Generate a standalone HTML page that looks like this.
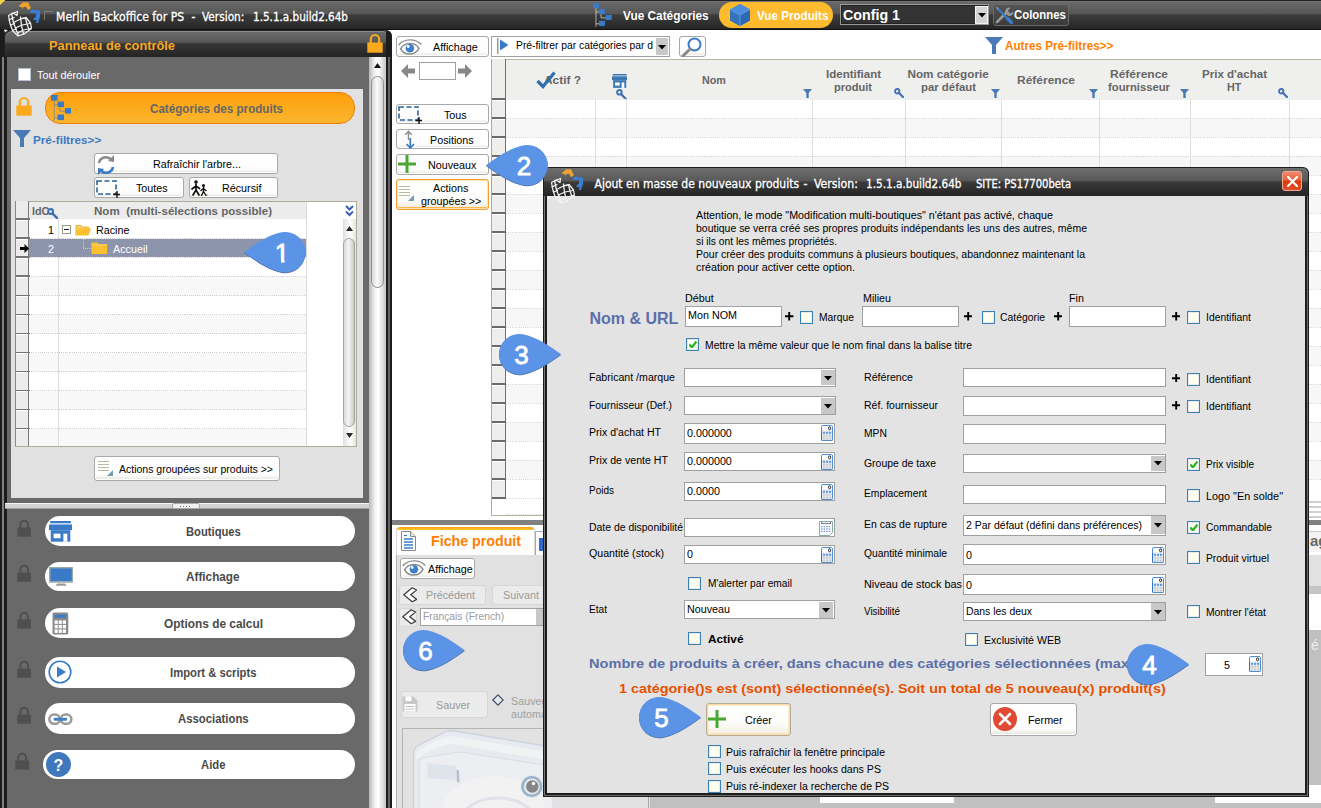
<!DOCTYPE html>
<html lang="fr"><head><meta charset="utf-8"><title>Merlin Backoffice for PS</title>
<style>

html,body{margin:0;padding:0}
body{width:1321px;height:808px;overflow:hidden;position:relative;background:#fff;font-family:"Liberation Sans",sans-serif;font-size:11px}
div,span.t,svg{position:absolute;box-sizing:border-box}
span.t{white-space:pre}
.btn{border:1px solid #a8a8a8;border-radius:3px;background:linear-gradient(#fff 0%,#fdfdfd 80%,#e6e3da 100%);box-shadow:inset 0 0 0 1px #fff}
.btnd{border:1px solid #d8d6cf;border-radius:3px;background:#ebebeb}
.tb{border:1px solid #a0a0a0;background:#fff}
.cb{width:13px;height:13px;border:1px solid #3c7fb1;background:#fffff0;box-shadow:inset 0 0 0 1px #e8ecf0}
.dd{background:#c8c8c8}
.pill{background:#fff;border-radius:15px}

</style></head>
<body>
<div style="left:0px;top:0px;width:1321px;height:29.5px;background:linear-gradient(#222 0 3%,#747474 4% 6%,#686868 8%,#565656 46%,#3d3d3d 49%,#242424 100%)"></div>
<div style="left:0px;top:29px;width:1321px;height:1px;background:#111"></div>
<div style="left:43.5px;top:10.5px;width:9px;height:1px;background:#7a7a7a"></div>
<div style="left:43.5px;top:10.5px;width:1px;height:9px;background:#7a7a7a"></div>
<span class="t" style="left:56.0px;top:9.0px;font-size:12px;line-height:16px;color:#fff;font-family:'DejaVu Sans Condensed','Liberation Sans',sans-serif;transform:scaleX(1.0083);transform-origin:0 50%;-webkit-text-stroke:0.300px #fff;">Merlin Backoffice for PS</span>
<span class="t" style="left:191.5px;top:9.0px;font-size:12px;line-height:16px;color:#fff;font-family:'DejaVu Sans Condensed','Liberation Sans',sans-serif;-webkit-text-stroke:0.300px #fff;">-</span>
<span class="t" style="left:202.4px;top:9.0px;font-size:12px;line-height:16px;color:#fff;font-family:'DejaVu Sans Condensed','Liberation Sans',sans-serif;transform:scaleX(0.9803);transform-origin:0 50%;-webkit-text-stroke:0.300px #fff;">Version:</span>
<span class="t" style="left:253.0px;top:9.0px;font-size:12px;line-height:16px;color:#fff;font-family:'DejaVu Sans Condensed','Liberation Sans',sans-serif;transform:scaleX(0.9657);transform-origin:0 50%;-webkit-text-stroke:0.300px #fff;">1.5.1.a.build2.64b</span>
<svg style="left:593px;top:3px;" width="18.7" height="25.5" viewBox="0 0 22 30"><path d="M3.5 4v24M3.5 10.5h6M9.5 10.5v7h6M3.5 24.5h6" fill="none" stroke="#c8c8c8" stroke-width="1"/><rect x="0" y="0" width="7" height="6" fill="#3a7bc8"/><rect x="7" y="7" width="7" height="6" fill="#3a7bc8"/><rect x="15" y="14" width="7" height="6" fill="#3a7bc8"/><rect x="7" y="21" width="7" height="6" fill="#3a7bc8"/></svg>
<span class="t" style="left:623.3px;top:7.7px;font-size:12px;line-height:16px;color:#fff;font-weight:bold;transform:scaleX(0.9859);transform-origin:0 50%;">Vue Catégories</span>
<div style="left:719px;top:2px;width:114px;height:26px;background:#fdbb2d;border-radius:13px"></div>
<svg style="left:729.6px;top:3.5px;" width="20" height="22" viewBox="0 0 20 22"><path d="M10 0l10 5.5v11L10 22L0 16.5v-11z" fill="#3a7bc8"/><path d="M10 0l10 5.5L10 11L0 5.5z" fill="#4d8edb"/><path d="M0 5.5L10 11v11L0 16.5z" fill="#3573bd"/><path d="M10 11l10-5.5v11L10 22z" fill="#2e69b3"/><path d="M0 5.5L10 11l10-5.5M10 11v11" stroke="#6aa5e8" stroke-width="0.8" fill="none"/></svg>
<span class="t" style="left:757.0px;top:7.7px;font-size:12px;line-height:16px;color:#fff;font-weight:bold;transform:scaleX(0.9704);transform-origin:0 50%;">Vue Produits</span>
<div style="left:839.8px;top:4.3px;width:149.6px;height:21px;background:#333;border:1px solid #9a9a9a;box-shadow:inset 0 0 0 1px #222"></div>
<span class="t" style="left:843.0px;top:6.0px;font-size:14px;line-height:18px;color:#fff;font-weight:bold;transform:scaleX(1.0179);transform-origin:0 50%;">Config 1</span>
<div style="left:974.7px;top:6px;width:13.5px;height:17.6px;background:#d4d4d4;border:1px solid #f4f4f4"></div>
<svg style="left:977.5px;top:13px;" width="8" height="5" viewBox="0 0 8 5"><path d="M0 0h8l-4 4.500z" fill="#000"/></svg>
<div style="left:993px;top:3.5px;width:76.2px;height:22px;background:linear-gradient(#555,#3a3a3a);border:1px solid #6a6a6a;border-radius:3px"></div>
<svg style="left:995px;top:5.5px;" width="18" height="18" viewBox="0 0 18 18"><path d="M2 16L11 7" stroke="#9a9a9a" stroke-width="2.6" stroke-linecap="round"/><path d="M10.5 7.5a4 4 0 0 1 5-5.6l-2.5 2.5l1 2l2 1l2.3-2.4a4 4 0 0 1-5.6 4.5" fill="#9a9a9a"/><path d="M2 2l12 12" stroke="#3a7bc8" stroke-width="2.2"/><path d="M12.5 12.5l4 4" stroke="#3a7bc8" stroke-width="3.4" stroke-linecap="round"/><path d="M0.8 0.8l3 1l-1.5 2z" fill="#9a9a9a"/></svg>
<span class="t" style="left:1014.0px;top:7.0px;font-size:12px;line-height:16px;color:#fff;font-weight:bold;transform:scaleX(0.9475);transform-origin:0 50%;">Colonnes</span>
<div style="left:391.7px;top:29.5px;width:930px;height:780px;background:#fff"></div>
<div style="left:0px;top:30px;width:11px;height:778px;background:#1c1c1c"></div>
<div style="left:4px;top:30px;width:387.7px;height:778px;background:#696969;border-radius:8px 8px 0 0"></div>
<div style="left:4px;top:30px;width:387px;height:27px;background:linear-gradient(#6c6c6c 0%,#585858 42%,#363636 50%,#242424 100%);border-radius:8px 8px 0 0;border:1px solid #222;border-bottom:none;box-shadow:inset 0 1px 0 #8c8c8c"></div>
<span class="t" style="left:49.0px;top:36.5px;font-size:13px;line-height:17px;color:#f7a823;font-weight:bold;transform:scaleX(0.9853);transform-origin:0 50%;">Panneau de contrôle</span>
<svg style="left:366.7px;top:33px;" width="16" height="20" viewBox="0 0 16 20"><path d="M3.800 10V6.200a4.200 4.200 0 0 1 8.400 0V10" fill="none" stroke="#fbaa1d" stroke-width="2.200"/><rect x="0.300" y="9.500" width="15.400" height="10.200" fill="#fbaa1d"/></svg>
<div style="left:0px;top:57px;width:7.3px;height:751px;background:linear-gradient(90deg,#1c1c1c 0 2.300px,#808080 2.300px 4.200px,#1c1c1c 4.200px)"></div>
<div style="left:368.7px;top:57px;width:17px;height:751px;background:linear-gradient(90deg,#b8b8b8,#f4f4f4 35%,#fff 55%,#c4c4c4)"></div>
<svg style="left:373.5px;top:63px;" width="7" height="5" viewBox="0 0 7 5"><path d="M3.500 0L7 5H0z" fill="#111"/></svg>
<div style="left:370.5px;top:76px;width:13.5px;height:212px;border:1px solid #909090;border-radius:7px;background:linear-gradient(90deg,#d8d8d8,#fafafa 45%,#e0e0e0 85%,#cccccc)"></div>
<div style="left:385.7px;top:57px;width:6px;height:751px;background:linear-gradient(90deg,#1c1c1c 0 35%,#8a8a8a 45% 55%,#1c1c1c 65%)"></div>
<div style="left:385.7px;top:30px;width:6px;height:27px;background:#1c1c1c;border-radius:0 8px 0 0"></div>
<div style="left:18px;top:68px;width:13px;height:13px;background:#fff;border:1px solid #b8c0d0"></div>
<span class="t" style="left:37.0px;top:66.5px;font-size:11.7px;line-height:15px;color:#fff;transform:scaleX(0.9235);transform-origin:0 50%;">Tout dérouler</span>
<div style="left:11px;top:89px;width:351.5px;height:409px;background:#e1e1e1"></div>
<svg style="left:16px;top:96px;" width="16" height="20" viewBox="0 0 16 20"><path d="M3.800 10V6.200a4.200 4.200 0 0 1 8.400 0V10" fill="none" stroke="#fbaa1d" stroke-width="2.200"/><rect x="0.300" y="9.500" width="15.400" height="10.200" fill="#fbaa1d"/></svg>
<div style="left:45px;top:92px;width:310px;height:32px;background:linear-gradient(#ff9f0a,#fbb62f);border:1px solid #f07c00;border-radius:15px"></div>
<svg style="left:51px;top:94.5px;" width="20.46" height="27.9" viewBox="0 0 22 30"><path d="M3.5 4v24M3.5 10.5h6M9.5 10.5v7h6M3.5 24.5h6" fill="none" stroke="#8a8a8a" stroke-width="1"/><rect x="0" y="0" width="7" height="6" fill="#3a7bc8"/><rect x="7" y="7" width="7" height="6" fill="#3a7bc8"/><rect x="15" y="14" width="7" height="6" fill="#3a7bc8"/><rect x="7" y="21" width="7" height="6" fill="#3a7bc8"/></svg>
<span class="t" style="left:150.0px;top:100.5px;font-size:12px;line-height:16px;color:#666;font-weight:bold;transform:scaleX(0.9682);transform-origin:0 50%;">Catégories des produits</span>
<svg style="left:13px;top:130px;" width="18" height="18" viewBox="0 0 18 18"><path d="M0 0h18l-7 8v9h-4v-9z" fill="#4a7ab5"/></svg>
<span class="t" style="left:33.0px;top:131.5px;font-size:11.7px;line-height:15px;color:#3d78c2;font-weight:bold;">Pré-filtres&gt;&gt;</span>
<div class="btn" style="left:94px;top:153.3px;width:183.5px;height:21px;"></div>
<svg style="left:97px;top:154.5px;" width="18" height="20" viewBox="0 0 18 20"><path d="M2 8a7 7 0 0 1 12-3.5" fill="none" stroke="#8a8a8a" stroke-width="2.6"/><path d="M11 6l6-6v7z" fill="#8a8a8a"/><path d="M16 12a7 7 0 0 1-12 3.5" fill="none" stroke="#3a7bc8" stroke-width="2.6"/><path d="M7 14l-6 6v-7z" fill="#3a7bc8"/></svg>
<span class="t" style="left:152.5px;top:156.0px;font-size:11.7px;line-height:15px;color:#000;transform:scaleX(0.9189);transform-origin:0 50%;">Rafraîchir l'arbre...</span>
<div class="btn" style="left:94px;top:177px;width:89.5px;height:21.3px;"></div>
<svg style="left:96px;top:179.5px;" width="24" height="18" viewBox="0 0 24 18"><rect x="1" y="1" width="19" height="13" fill="none" stroke="#2a6496" stroke-width="1.6" stroke-dasharray="5 2.5"/><path d="M21 11v7M17.5 14.5h7" stroke="#111" stroke-width="1.4"/></svg>
<span class="t" style="left:135.7px;top:180.0px;font-size:11.7px;line-height:15px;color:#000;transform:scaleX(0.9200);transform-origin:0 50%;">Toutes</span>
<div class="btn" style="left:189px;top:177px;width:88.5px;height:21.3px;"></div>
<svg style="left:191px;top:180px;" width="18" height="16" viewBox="0 0 18 16"><circle cx="5" cy="2" r="1.8" fill="#111"/><path d="M5 4v6M5 10l-3 5M5 10l3 5M5 6l-4 3M5 6l3.5 2.5" stroke="#111" stroke-width="1.7" fill="none" stroke-linecap="round"/><circle cx="12.5" cy="5.5" r="1.5" fill="#111"/><path d="M12.5 7v4.5M12.5 11.5l-2 4M12.5 11.5l2.5 4M12.5 8.5l-2.5 2M12.5 8.5l2.5 2" stroke="#111" stroke-width="1.4" fill="none" stroke-linecap="round"/><circle cx="16" cy="15" r="0.7" fill="#3a3"/></svg>
<span class="t" style="left:221.8px;top:180.0px;font-size:11.7px;line-height:15px;color:#000;transform:scaleX(0.9200);transform-origin:0 50%;">Récursif</span>
<div style="left:15px;top:201.3px;width:341.5px;height:245.5px;background:#fff;border:1px solid #b0ac9c"></div>
<div style="left:16px;top:202.3px;width:290px;height:17.1px;background:#ececec"></div>
<div style="left:29px;top:238.43px;width:277px;height:19.03px;background:#f8f8f8"></div>
<div style="left:29px;top:276.49px;width:277px;height:19.03px;background:#f8f8f8"></div>
<div style="left:29px;top:314.55px;width:277px;height:19.03px;background:#f8f8f8"></div>
<div style="left:29px;top:352.61px;width:277px;height:19.03px;background:#f8f8f8"></div>
<div style="left:29px;top:390.67px;width:277px;height:19.03px;background:#f8f8f8"></div>
<div style="left:29px;top:428.73px;width:277px;height:17.07px;background:#f8f8f8"></div>
<div style="left:29px;top:237.93px;width:277px;height:1px;background:repeating-linear-gradient(90deg,#d0d0d0 0 1.05px,transparent 1.05px 2.13px)"></div>
<div style="left:29px;top:256.96px;width:277px;height:1px;background:repeating-linear-gradient(90deg,#d0d0d0 0 1.05px,transparent 1.05px 2.13px)"></div>
<div style="left:29px;top:275.99px;width:277px;height:1px;background:repeating-linear-gradient(90deg,#d0d0d0 0 1.05px,transparent 1.05px 2.13px)"></div>
<div style="left:29px;top:295.02px;width:277px;height:1px;background:repeating-linear-gradient(90deg,#d0d0d0 0 1.05px,transparent 1.05px 2.13px)"></div>
<div style="left:29px;top:314.05px;width:277px;height:1px;background:repeating-linear-gradient(90deg,#d0d0d0 0 1.05px,transparent 1.05px 2.13px)"></div>
<div style="left:29px;top:333.08px;width:277px;height:1px;background:repeating-linear-gradient(90deg,#d0d0d0 0 1.05px,transparent 1.05px 2.13px)"></div>
<div style="left:29px;top:352.11px;width:277px;height:1px;background:repeating-linear-gradient(90deg,#d0d0d0 0 1.05px,transparent 1.05px 2.13px)"></div>
<div style="left:29px;top:371.14px;width:277px;height:1px;background:repeating-linear-gradient(90deg,#d0d0d0 0 1.05px,transparent 1.05px 2.13px)"></div>
<div style="left:29px;top:390.17px;width:277px;height:1px;background:repeating-linear-gradient(90deg,#d0d0d0 0 1.05px,transparent 1.05px 2.13px)"></div>
<div style="left:29px;top:409.2px;width:277px;height:1px;background:repeating-linear-gradient(90deg,#d0d0d0 0 1.05px,transparent 1.05px 2.13px)"></div>
<div style="left:29px;top:428.23px;width:277px;height:1px;background:repeating-linear-gradient(90deg,#d0d0d0 0 1.05px,transparent 1.05px 2.13px)"></div>
<div style="left:58px;top:219.4px;width:1px;height:226.9px;background:#dcdcdc"></div>
<div style="left:306px;top:202px;width:1px;height:244.3px;background:#dcdcdc"></div>
<div style="left:15px;top:201.3px;width:14px;height:245px;background:#ececec;border-left:1px solid #888"></div>
<div style="left:28.3px;top:201.3px;width:1.2px;height:245px;background:#7a7a7a"></div>
<div style="left:16px;top:218.4px;width:13.5px;height:1.4px;background:#747474"></div>
<div style="left:16px;top:219.8px;width:12.3px;height:1px;background:#fff"></div>
<div style="left:16px;top:237.43px;width:13.5px;height:1.4px;background:#747474"></div>
<div style="left:16px;top:238.83px;width:12.3px;height:1px;background:#fff"></div>
<div style="left:16px;top:256.46px;width:13.5px;height:1.4px;background:#747474"></div>
<div style="left:16px;top:257.86px;width:12.3px;height:1px;background:#fff"></div>
<div style="left:16px;top:275.49px;width:13.5px;height:1.4px;background:#747474"></div>
<div style="left:16px;top:276.89px;width:12.3px;height:1px;background:#fff"></div>
<div style="left:16px;top:294.52px;width:13.5px;height:1.4px;background:#747474"></div>
<div style="left:16px;top:295.92px;width:12.3px;height:1px;background:#fff"></div>
<div style="left:16px;top:313.55px;width:13.5px;height:1.4px;background:#747474"></div>
<div style="left:16px;top:314.95px;width:12.3px;height:1px;background:#fff"></div>
<div style="left:16px;top:332.58px;width:13.5px;height:1.4px;background:#747474"></div>
<div style="left:16px;top:333.98px;width:12.3px;height:1px;background:#fff"></div>
<div style="left:16px;top:351.61px;width:13.5px;height:1.4px;background:#747474"></div>
<div style="left:16px;top:353.01px;width:12.3px;height:1px;background:#fff"></div>
<div style="left:16px;top:370.64px;width:13.5px;height:1.4px;background:#747474"></div>
<div style="left:16px;top:372.04px;width:12.3px;height:1px;background:#fff"></div>
<div style="left:16px;top:389.67px;width:13.5px;height:1.4px;background:#747474"></div>
<div style="left:16px;top:391.07px;width:12.3px;height:1px;background:#fff"></div>
<div style="left:16px;top:408.7px;width:13.5px;height:1.4px;background:#747474"></div>
<div style="left:16px;top:410.1px;width:12.3px;height:1px;background:#fff"></div>
<div style="left:16px;top:427.73px;width:13.5px;height:1.4px;background:#747474"></div>
<div style="left:16px;top:429.13px;width:12.3px;height:1px;background:#fff"></div>
<span class="t" style="left:32.0px;top:202.5px;font-size:11.7px;line-height:15px;color:#666;font-weight:bold;transform:scaleX(0.9200);transform-origin:0 50%;">IdC</span>
<svg style="left:47.3px;top:207.6px;" width="11.2" height="11.2" viewBox="0 0 10 10"><circle cx="3.2" cy="3.2" r="2.2" fill="none" stroke="#3d6fb5" stroke-width="1.8"/><path d="M5 5l4 4" stroke="#3d6fb5" stroke-width="2.2" stroke-linecap="round"/></svg>
<span class="t" style="left:94.0px;top:202.5px;font-size:11.7px;line-height:15px;color:#666;font-weight:bold;transform:scaleX(0.9895);transform-origin:0 50%;">Nom  (multi-sélections possible)</span>
<svg style="left:344.5px;top:205px;" width="9" height="12" viewBox="0 0 9 12"><path d="M1 1l3.5 3.5L8 1M1 6.5l3.5 3.5L8 6.5" fill="none" stroke="#3d5fb5" stroke-width="2"/></svg>
<span class="t" style="left:48.0px;top:221.7px;font-size:11.7px;line-height:15px;color:#000;transform:scaleX(0.9200);transform-origin:0 50%;">1</span>
<div style="left:61.8px;top:225px;width:9px;height:9px;background:#fff;border:1px solid #9c9c8c"></div>
<div style="left:63.8px;top:229px;width:5px;height:1px;background:#111"></div>
<svg style="left:75px;top:222.6px;" width="16" height="13" viewBox="0 0 16 13"><path d="M1 12V2.5h5l1.5 1.5h6v2" fill="#f6d36b" stroke="#d9a520" stroke-width="0.8"/><path d="M0.5 12.5l2.5-7h13l-2.5 7z" fill="#fbc02d"/></svg>
<span class="t" style="left:96.4px;top:221.7px;font-size:11.7px;line-height:15px;color:#000;transform:scaleX(0.9200);transform-origin:0 50%;">Racine</span>
<div style="left:29px;top:238.9px;width:277.2px;height:18.6px;background:#8d95ad"></div>
<svg style="left:19.5px;top:244.2px;" width="9" height="9" viewBox="0 0 9 9"><path d="M0 3h4.500V0L9 4.500L4.500 9V6H0z" fill="#000"/></svg>
<span class="t" style="left:48.0px;top:240.7px;font-size:11.7px;line-height:15px;color:#fff;transform:scaleX(0.9200);transform-origin:0 50%;">2</span>
<div style="left:82.5px;top:248.1px;width:9px;height:1px;background:repeating-linear-gradient(90deg,#ccc 0 1px,transparent 1px 2px)"></div>
<div style="left:82.5px;top:238.5px;width:1px;height:10px;background:repeating-linear-gradient(#ccc 0 1px,transparent 1px 2px)"></div>
<svg style="left:91px;top:241.2px;" width="16.64" height="13.52" viewBox="0 0 16 13"><path d="M0.5 12.5V1.5h5.5l1.5 1.5h8v9.5z" fill="#fbc02d"/><path d="M0.5 4h15" stroke="#f9d56e" stroke-width="1"/></svg>
<span class="t" style="left:112.7px;top:240.7px;font-size:11.7px;line-height:15px;color:#fff;transform:scaleX(0.9200);transform-origin:0 50%;">Accueil</span>
<div style="left:342.5px;top:219px;width:13.3px;height:226.8px;background:linear-gradient(90deg,#e4e4e4,#fff 50%,#e4e4e4);border-left:1px solid #e0e0e0"></div>
<svg style="left:346px;top:226px;" width="7" height="5" viewBox="0 0 7 5"><path d="M3.500 0l3.500 5H0z" fill="#2a2a2a"/></svg>
<svg style="left:346px;top:433px;" width="7" height="5" viewBox="0 0 7 5"><path d="M3.500 5l3.500-5H0z" fill="#2a2a2a"/></svg>
<div style="left:343.2px;top:237.5px;width:12.3px;height:189px;border:1px solid #a4a4a4;border-radius:6px;background:linear-gradient(90deg,#dadada,#f4f4f4 45%,#d6d6d6 85%,#c4c4c4)"></div>
<div class="btn" style="left:94px;top:456.2px;width:185.6px;height:25px;"></div>
<svg style="left:97px;top:459.5px;" width="17" height="17" viewBox="0 0 17 17"><path d="M1 1.5h11M1 4.5h11M1 7.5h11M1 10.5h11" stroke="#b9b9a4" stroke-width="1"/><path d="M10 16l6-6v6z" fill="#6f9eb5"/></svg>
<span class="t" style="left:119.0px;top:461.0px;font-size:11.7px;line-height:15px;color:#000;transform:scaleX(0.8978);transform-origin:0 50%;">Actions groupées sur produits &gt;&gt;</span>
<div style="left:11px;top:498px;width:357px;height:5px;background:#696969"></div>
<div style="left:5px;top:503px;width:364px;height:5.5px;background:#d2d2d2;border-top:1px solid #f4f4f4;border-bottom:1px solid #a0a0a0"></div>
<div style="left:172px;top:503px;width:28px;height:5.5px;background:#f0f0f0;border:1px solid #aaa;border-radius:2px"></div>
<div style="left:180px;top:505.5px;width:12px;height:1px;background:repeating-linear-gradient(90deg,#777 0 1px,transparent 1px 3px)"></div>
<div class="pill" style="left:44.6px;top:516.45px;width:310.7px;height:29.7px;"></div>
<svg style="left:16.8px;top:518.8px;" width="14.4" height="18" viewBox="0 0 16 20"><path d="M3.800 10V6.200a4.200 4.200 0 0 1 8.400 0V10" fill="none" stroke="#4f4f4f" stroke-width="2.200"/><rect x="0.300" y="9.500" width="15.400" height="10.200" fill="#4f4f4f"/></svg>
<svg style="left:48.5px;top:521px;" width="23" height="20.7" viewBox="0 0 20 18"><rect x="1" y="0" width="18" height="2" fill="#3a7bc8"/><path d="M0 3h20v5H0z" fill="#3a7bc8"/><path d="M1.5 8v10h17V8" fill="#3a7bc8"/><rect x="4" y="11" width="6" height="4" fill="#fff"/><rect x="12.5" y="11" width="3.5" height="7" fill="#fff"/></svg>
<span class="t" style="left:185.8px;top:523.8px;font-size:12px;line-height:16px;color:#4a4a4a;font-weight:bold;transform:scaleX(0.9340);transform-origin:0 50%;">Boutiques</span>
<div class="pill" style="left:44.6px;top:561.55px;width:310.7px;height:29.7px;"></div>
<svg style="left:16.8px;top:563.9px;" width="14.4" height="18" viewBox="0 0 16 20"><path d="M3.800 10V6.200a4.200 4.200 0 0 1 8.400 0V10" fill="none" stroke="#4f4f4f" stroke-width="2.200"/><rect x="0.300" y="9.500" width="15.400" height="10.200" fill="#4f4f4f"/></svg>
<svg style="left:48.5px;top:567px;" width="24.2" height="19.8" viewBox="0 0 22 18"><rect x="0.5" y="0.5" width="21" height="13" fill="#3a7bc8" stroke="#9aa" stroke-width="1.6"/><path d="M6 17h10l-1.5-2h-7z" fill="#999"/></svg>
<span class="t" style="left:186.4px;top:568.9px;font-size:12px;line-height:16px;color:#4a4a4a;font-weight:bold;transform:scaleX(0.9801);transform-origin:0 50%;">Affichage</span>
<div class="pill" style="left:44.6px;top:608.45px;width:310.7px;height:29.7px;"></div>
<svg style="left:16.8px;top:610.8px;" width="14.4" height="18" viewBox="0 0 16 20"><path d="M3.800 10V6.200a4.200 4.200 0 0 1 8.400 0V10" fill="none" stroke="#4f4f4f" stroke-width="2.200"/><rect x="0.300" y="9.500" width="15.400" height="10.200" fill="#4f4f4f"/></svg>
<svg style="left:52px;top:611.5px;" width="16.8" height="23.1" viewBox="0 0 16 22"><rect x="0.5" y="0.5" width="15" height="21" rx="1.5" fill="#8a8a8a"/><rect x="2.5" y="2.5" width="11" height="3" fill="#3a7bc8"/><rect x="2.5" y="8.0" width="3" height="3.3" fill="#fff"/><rect x="6.4" y="8.0" width="3" height="3.3" fill="#fff"/><rect x="10.3" y="8.0" width="3" height="3.3" fill="#fff"/><rect x="2.5" y="12.3" width="3" height="3.3" fill="#fff"/><rect x="6.4" y="12.3" width="3" height="3.3" fill="#fff"/><rect x="10.3" y="12.3" width="3" height="3.3" fill="#fff"/><rect x="2.5" y="16.6" width="3" height="3.3" fill="#fff"/><rect x="6.4" y="16.6" width="3" height="3.3" fill="#fff"/><rect x="10.3" y="16.6" width="3" height="3.3" fill="#fff"/></svg>
<span class="t" style="left:163.7px;top:615.8px;font-size:12px;line-height:16px;color:#4a4a4a;font-weight:bold;transform:scaleX(0.9897);transform-origin:0 50%;">Options de calcul</span>
<div class="pill" style="left:44.6px;top:657px;width:310.7px;height:31px;"></div>
<svg style="left:16.8px;top:660px;" width="14.4" height="18" viewBox="0 0 16 20"><path d="M3.800 10V6.200a4.200 4.200 0 0 1 8.400 0V10" fill="none" stroke="#4f4f4f" stroke-width="2.200"/><rect x="0.300" y="9.500" width="15.400" height="10.200" fill="#4f4f4f"/></svg>
<svg style="left:47.9px;top:659.9px;" width="24" height="24" viewBox="0 0 24 24"><circle cx="12" cy="12" r="10.8" fill="#fff" stroke="#3a7bc8" stroke-width="1.6"/><path d="M9 6.5v11l9-5.5z" fill="#3a7bc8"/></svg>
<span class="t" style="left:169.9px;top:665.0px;font-size:12px;line-height:16px;color:#4a4a4a;font-weight:bold;transform:scaleX(0.9401);transform-origin:0 50%;">Import &amp; scripts</span>
<div class="pill" style="left:44.6px;top:703px;width:310.7px;height:31px;"></div>
<svg style="left:16.8px;top:706px;" width="14.4" height="18" viewBox="0 0 16 20"><path d="M3.800 10V6.200a4.200 4.200 0 0 1 8.400 0V10" fill="none" stroke="#4f4f4f" stroke-width="2.200"/><rect x="0.300" y="9.500" width="15.400" height="10.200" fill="#4f4f4f"/></svg>
<svg style="left:48px;top:712.5px;" width="24.72" height="12.36" viewBox="0 0 24 12"><rect x="1.300" y="1.500" width="10.200" height="9" rx="4.500" fill="none" stroke="#9a9a9a" stroke-width="2.400"/><rect x="12.500" y="1.500" width="10.200" height="9" rx="4.500" fill="none" stroke="#9a9a9a" stroke-width="2.400"/><rect x="5.500" y="4.500" width="13" height="3" rx="1.300" fill="#3f7fc8"/></svg>
<span class="t" style="left:177.8px;top:711.0px;font-size:12px;line-height:16px;color:#4a4a4a;font-weight:bold;transform:scaleX(0.9464);transform-origin:0 50%;">Associations</span>
<div class="pill" style="left:43px;top:749.8px;width:312.3px;height:29.2px;"></div>
<svg style="left:15.3px;top:751.9px;" width="14.4" height="18" viewBox="0 0 16 20"><path d="M3.800 10V6.200a4.200 4.200 0 0 1 8.400 0V10" fill="none" stroke="#4f4f4f" stroke-width="2.200"/><rect x="0.300" y="9.500" width="15.400" height="10.200" fill="#4f4f4f"/></svg>
<svg style="left:46px;top:752.2px;" width="24.96" height="24.96" viewBox="0 0 24 24"><circle cx="12" cy="12" r="12" fill="#3f78bd"/></svg>
<span class="t" style="left:201.0px;top:756.9px;font-size:12px;line-height:16px;color:#4a4a4a;font-weight:bold;transform:scaleX(0.9379);transform-origin:0 50%;">Aide</span>
<span class="t" style="left:53.6px;top:754.5px;font-size:16px;line-height:21px;color:#fff;font-weight:bold;">?</span>
<svg style="left:0px;top:0px;" width="44" height="40" viewBox="0 0 44 40"><path d="M19 5.500l3-2l1-1.500l2 0.500l2-0.500l2 1.500l0.500 2.500l1.500 1.500l-1 1.500l-2 1l-1-2l-2-1.500l-2 1l-0.500 1.500l-1-2l-2.500-0.500z" fill="#efa22f"/><path d="M30 11l3-2l2 1.500l4-0.500l1 2v5l-1 3l-1 3h-2l0.500-3h-3.500l1.500-2.500l1.500-0.500v-4h-3l-3-0.500z" fill="#3a7fd5"/><g fill="none" stroke="#f2f2f2" stroke-width="1.250" stroke-linejoin="round" stroke-linecap="round"><path d="M17.500 11.500l-4 1.500l-5 2.500l1.500 8l2.500 7l5.500 5.500l6-2l7.500-5.500l-1-5.500l-4.500-5.500l-5 1"/><path d="M11.500 13.500l2 9.500l3 7.500l2 5"/><path d="M9 20l5-2.500M10.500 25l4-1.500M12.500 30.500l3.500-1.500"/><path d="M13.500 22.500l7-3.500l5.500-1M15.500 28l6.500-3l8-1.500M17.500 33l6-3l7-1.500"/><path d="M20.500 17l1 8.500l2 8.500M25.500 18l1.500 6l2 5.500"/><path d="M13 13l4 2.500l0.500-4"/></g><path d="M4 29.500l4 0.500l-3 2.500z" fill="#f2f2f2"/></svg>
<svg style="left:0px;top:0px;" width="6" height="6" viewBox="0 0 6 6"><path d="M0 0h5.500L0 5z" fill="#f2d048"/></svg>
<div class="btn" style="left:396.3px;top:36.3px;width:92.7px;height:20.7px;"></div>
<svg style="left:398px;top:38.5px;" width="24" height="17" viewBox="0 0 24 17"><path d="M0.700 6C6 -0.800 17.500 -0.800 23.300 5.500" fill="none" stroke="#8c8c8c" stroke-width="1.400"/><path d="M2.600 9.800C6.500 2.800 16.800 2.800 21 9.300C17 16.800 6.500 16.800 2.600 9.800z" fill="#fff" stroke="#8c8c8c" stroke-width="1.500"/><circle cx="11.900" cy="9.300" r="4.300" fill="#3d7fc8"/><circle cx="10.200" cy="7.500" r="1.400" fill="#fff"/></svg>
<span class="t" style="left:432.7px;top:39.0px;font-size:11.7px;line-height:15px;color:#000;transform:scaleX(0.9200);transform-origin:0 50%;">Affichage</span>
<div class="tb" style="left:491px;top:36px;width:178.6px;height:20.5px;"></div>
<svg style="left:497px;top:38px;" width="12" height="16" viewBox="0 0 12 16"><path d="M0.500 0v16" stroke="#9a9a9a" stroke-width="2"/><path d="M3 1.500l8.500 5.500L3 12.500z" fill="#3a7bc8"/></svg>
<span class="t" style="left:516.0px;top:37.0px;font-size:11.7px;line-height:15px;color:#000;transform:scaleX(0.8824);transform-origin:0 50%;">Pré-filtrer par catégories par d</span>
<div class="dd" style="left:655.8px;top:37.5px;width:12px;height:17px;"></div>
<svg style="left:657.8px;top:44.5px;" width="8" height="5" viewBox="0 0 8 5"><path d="M0 0h8l-4 4.500z" fill="#000"/></svg>
<div class="btn" style="left:679px;top:36.4px;width:27.4px;height:20.6px;"></div>
<svg style="left:681px;top:37px;" width="22" height="20" viewBox="0 0 22 20"><circle cx="13.5" cy="7.5" r="6" fill="#fff" stroke="#3a7bc8" stroke-width="2"/><path d="M8.5 12.5L2 19" stroke="#8a8a8a" stroke-width="3" stroke-linecap="round"/></svg>
<svg style="left:984.5px;top:37px;" width="18" height="18" viewBox="0 0 18 18"><path d="M0 0h18l-7 8v9h-4v-9z" fill="#4a7ab5"/></svg>
<span class="t" style="left:1004.6px;top:37.7px;font-size:12px;line-height:16px;color:#ff8000;font-weight:bold;transform:scaleX(0.9732);transform-origin:0 50%;">Autres Pré-filtres&gt;&gt;</span>
<svg style="left:401px;top:64px;" width="14" height="14" viewBox="0 0 14 14"><path d="M0 7l7-7v4.5h7v5H7V14z" fill="#888"/></svg>
<div class="tb" style="left:419px;top:62px;width:37px;height:17.7px;"></div>
<svg style="left:458px;top:64px;" width="14" height="14" viewBox="0 0 14 14"><path d="M14 7l-7-7v4.5H0v5h7V14z" fill="#888"/></svg>
<div class="btn" style="left:396.3px;top:104.3px;width:92.7px;height:20.2px;"></div>
<svg style="left:398px;top:106px;" width="24" height="18" viewBox="0 0 24 18"><rect x="1" y="1" width="19" height="13" fill="none" stroke="#2a6496" stroke-width="1.6" stroke-dasharray="5 2.5"/><path d="M21 11v7M17.5 14.5h7" stroke="#111" stroke-width="1.4"/></svg>
<span class="t" style="left:443.6px;top:106.9px;font-size:11.7px;line-height:15px;color:#000;transform:scaleX(0.9200);transform-origin:0 50%;">Tous</span>
<div class="btn" style="left:396.3px;top:129.2px;width:92.7px;height:20.3px;"></div>
<svg style="left:402.5px;top:130px;" width="14" height="20" viewBox="0 0 14 20"><path d="M5.5 10V1.5M2.3 4.8L5.5 1.3L8.700 4.800" fill="none" stroke="#8f8f8f" stroke-width="1.5"/><path d="M7.300 8v10M3.600 14L7.300 18L11 14" fill="none" stroke="#3a7bc8" stroke-width="1.700"/></svg>
<span class="t" style="left:430.2px;top:131.8px;font-size:11.7px;line-height:15px;color:#000;transform:scaleX(0.9200);transform-origin:0 50%;">Positions</span>
<div class="btn" style="left:396.3px;top:154.1px;width:92.7px;height:20.6px;"></div>
<svg style="left:398px;top:155px;" width="18" height="18" viewBox="0 0 18 18"><path d="M9 0v18M0 9h18" stroke="#4aa832" stroke-width="3"/></svg>
<span class="t" style="left:427.8px;top:156.9px;font-size:11.7px;line-height:15px;color:#000;transform:scaleX(0.9200);transform-origin:0 50%;">Nouveaux</span>
<div style="left:396.3px;top:179.4px;width:92.7px;height:30.2px;border:1px solid #f0a030;border-radius:3px;background:linear-gradient(#fff,#fbfbf8 70%,#f3ead8);box-shadow:inset 0 0 0 1px #fde3b0, inset 0 -2px 0 0 #f9b54a"></div>
<svg style="left:398px;top:185px;" width="17" height="17" viewBox="0 0 17 17"><path d="M1 1.5h11M1 4.5h11M1 7.5h11M1 10.5h11" stroke="#b9b9a4" stroke-width="1"/><path d="M10 16l6-6v6z" fill="#6f9eb5"/></svg>
<span class="t" style="left:433.4px;top:180.0px;font-size:11.7px;line-height:15px;color:#000;transform:scaleX(0.9200);transform-origin:0 50%;">Actions</span>
<span class="t" style="left:420.8px;top:193.0px;font-size:11.7px;line-height:15px;color:#000;transform:scaleX(0.9200);transform-origin:0 50%;">groupées &gt;&gt;</span>
<div style="left:491.4px;top:58.5px;width:830px;height:1px;background:#b8b4a8"></div>
<div style="left:506px;top:59.5px;width:816px;height:40.3px;background:#efefee"></div>
<div style="left:506px;top:118.31px;width:816px;height:19.01px;background:#f7f7f7"></div>
<div style="left:506px;top:156.33px;width:816px;height:19.01px;background:#f7f7f7"></div>
<div style="left:506px;top:194.35px;width:816px;height:19.01px;background:#f7f7f7"></div>
<div style="left:506px;top:232.37px;width:816px;height:19.01px;background:#f7f7f7"></div>
<div style="left:506px;top:270.39px;width:816px;height:19.01px;background:#f7f7f7"></div>
<div style="left:506px;top:308.41px;width:816px;height:19.01px;background:#f7f7f7"></div>
<div style="left:506px;top:346.43px;width:816px;height:19.01px;background:#f7f7f7"></div>
<div style="left:506px;top:384.45px;width:816px;height:19.01px;background:#f7f7f7"></div>
<div style="left:506px;top:422.47px;width:816px;height:19.01px;background:#f7f7f7"></div>
<div style="left:506px;top:460.49px;width:816px;height:19.01px;background:#f7f7f7"></div>
<div style="left:506px;top:117.81px;width:816px;height:1px;background:repeating-linear-gradient(90deg,#d8d8d8 0 1.05px,transparent 1.05px 2.13px)"></div>
<div style="left:506px;top:136.82px;width:816px;height:1px;background:repeating-linear-gradient(90deg,#d8d8d8 0 1.05px,transparent 1.05px 2.13px)"></div>
<div style="left:506px;top:155.83px;width:816px;height:1px;background:repeating-linear-gradient(90deg,#d8d8d8 0 1.05px,transparent 1.05px 2.13px)"></div>
<div style="left:506px;top:174.84px;width:816px;height:1px;background:repeating-linear-gradient(90deg,#d8d8d8 0 1.05px,transparent 1.05px 2.13px)"></div>
<div style="left:506px;top:193.85px;width:816px;height:1px;background:repeating-linear-gradient(90deg,#d8d8d8 0 1.05px,transparent 1.05px 2.13px)"></div>
<div style="left:506px;top:212.86px;width:816px;height:1px;background:repeating-linear-gradient(90deg,#d8d8d8 0 1.05px,transparent 1.05px 2.13px)"></div>
<div style="left:506px;top:231.87px;width:816px;height:1px;background:repeating-linear-gradient(90deg,#d8d8d8 0 1.05px,transparent 1.05px 2.13px)"></div>
<div style="left:506px;top:250.88px;width:816px;height:1px;background:repeating-linear-gradient(90deg,#d8d8d8 0 1.05px,transparent 1.05px 2.13px)"></div>
<div style="left:506px;top:269.89px;width:816px;height:1px;background:repeating-linear-gradient(90deg,#d8d8d8 0 1.05px,transparent 1.05px 2.13px)"></div>
<div style="left:506px;top:288.9px;width:816px;height:1px;background:repeating-linear-gradient(90deg,#d8d8d8 0 1.05px,transparent 1.05px 2.13px)"></div>
<div style="left:506px;top:307.91px;width:816px;height:1px;background:repeating-linear-gradient(90deg,#d8d8d8 0 1.05px,transparent 1.05px 2.13px)"></div>
<div style="left:506px;top:326.92px;width:816px;height:1px;background:repeating-linear-gradient(90deg,#d8d8d8 0 1.05px,transparent 1.05px 2.13px)"></div>
<div style="left:506px;top:345.93px;width:816px;height:1px;background:repeating-linear-gradient(90deg,#d8d8d8 0 1.05px,transparent 1.05px 2.13px)"></div>
<div style="left:506px;top:364.94px;width:816px;height:1px;background:repeating-linear-gradient(90deg,#d8d8d8 0 1.05px,transparent 1.05px 2.13px)"></div>
<div style="left:506px;top:383.95px;width:816px;height:1px;background:repeating-linear-gradient(90deg,#d8d8d8 0 1.05px,transparent 1.05px 2.13px)"></div>
<div style="left:506px;top:402.96px;width:816px;height:1px;background:repeating-linear-gradient(90deg,#d8d8d8 0 1.05px,transparent 1.05px 2.13px)"></div>
<div style="left:506px;top:421.97px;width:816px;height:1px;background:repeating-linear-gradient(90deg,#d8d8d8 0 1.05px,transparent 1.05px 2.13px)"></div>
<div style="left:506px;top:440.98px;width:816px;height:1px;background:repeating-linear-gradient(90deg,#d8d8d8 0 1.05px,transparent 1.05px 2.13px)"></div>
<div style="left:506px;top:459.99px;width:816px;height:1px;background:repeating-linear-gradient(90deg,#d8d8d8 0 1.05px,transparent 1.05px 2.13px)"></div>
<div style="left:506px;top:479px;width:816px;height:1px;background:repeating-linear-gradient(90deg,#d8d8d8 0 1.05px,transparent 1.05px 2.13px)"></div>
<div style="left:506px;top:498.01px;width:816px;height:1px;background:repeating-linear-gradient(90deg,#d8d8d8 0 1.05px,transparent 1.05px 2.13px)"></div>
<div style="left:506px;top:513.6px;width:816px;height:1px;background:repeating-linear-gradient(90deg,#d8d8d8 0 1.05px,transparent 1.05px 2.13px)"></div>
<div style="left:594.9px;top:99.3px;width:1px;height:399.2px;background:#dedede"></div>
<div style="left:625.9px;top:99.3px;width:1px;height:399.2px;background:#dedede"></div>
<div style="left:811.9px;top:99.3px;width:1px;height:399.2px;background:#dedede"></div>
<div style="left:905px;top:99.3px;width:1px;height:399.2px;background:#dedede"></div>
<div style="left:1000.8px;top:99.3px;width:1px;height:399.2px;background:#dedede"></div>
<div style="left:1098.8px;top:99.3px;width:1px;height:399.2px;background:#dedede"></div>
<div style="left:1189.8px;top:99.3px;width:1px;height:399.2px;background:#dedede"></div>
<div style="left:1289.2px;top:99.3px;width:1px;height:399.2px;background:#dedede"></div>
<div style="left:491.4px;top:59px;width:14.3px;height:439.5px;background:#eeeeec;border-left:1px solid #b0a890"></div>
<div style="left:491.4px;top:498px;width:1px;height:17.5px;background:#b0a890"></div>
<div style="left:504.6px;top:59px;width:1.5px;height:440px;background:#707070"></div>
<div style="left:492.4px;top:98.1px;width:14px;height:1.6px;background:#6a6a6a"></div>
<div style="left:492.4px;top:99.7px;width:12.2px;height:1px;background:#fff"></div>
<div style="left:492.4px;top:117.11px;width:14px;height:1.6px;background:#6a6a6a"></div>
<div style="left:492.4px;top:118.71px;width:12.2px;height:1px;background:#fff"></div>
<div style="left:492.4px;top:136.12px;width:14px;height:1.6px;background:#6a6a6a"></div>
<div style="left:492.4px;top:137.72px;width:12.2px;height:1px;background:#fff"></div>
<div style="left:492.4px;top:155.13px;width:14px;height:1.6px;background:#6a6a6a"></div>
<div style="left:492.4px;top:156.73px;width:12.2px;height:1px;background:#fff"></div>
<div style="left:492.4px;top:174.14px;width:14px;height:1.6px;background:#6a6a6a"></div>
<div style="left:492.4px;top:175.74px;width:12.2px;height:1px;background:#fff"></div>
<div style="left:492.4px;top:193.15px;width:14px;height:1.6px;background:#6a6a6a"></div>
<div style="left:492.4px;top:194.75px;width:12.2px;height:1px;background:#fff"></div>
<div style="left:492.4px;top:212.16px;width:14px;height:1.6px;background:#6a6a6a"></div>
<div style="left:492.4px;top:213.76px;width:12.2px;height:1px;background:#fff"></div>
<div style="left:492.4px;top:231.17px;width:14px;height:1.6px;background:#6a6a6a"></div>
<div style="left:492.4px;top:232.77px;width:12.2px;height:1px;background:#fff"></div>
<div style="left:492.4px;top:250.18px;width:14px;height:1.6px;background:#6a6a6a"></div>
<div style="left:492.4px;top:251.78px;width:12.2px;height:1px;background:#fff"></div>
<div style="left:492.4px;top:269.19px;width:14px;height:1.6px;background:#6a6a6a"></div>
<div style="left:492.4px;top:270.79px;width:12.2px;height:1px;background:#fff"></div>
<div style="left:492.4px;top:288.2px;width:14px;height:1.6px;background:#6a6a6a"></div>
<div style="left:492.4px;top:289.8px;width:12.2px;height:1px;background:#fff"></div>
<div style="left:492.4px;top:307.21px;width:14px;height:1.6px;background:#6a6a6a"></div>
<div style="left:492.4px;top:308.81px;width:12.2px;height:1px;background:#fff"></div>
<div style="left:492.4px;top:326.22px;width:14px;height:1.6px;background:#6a6a6a"></div>
<div style="left:492.4px;top:327.82px;width:12.2px;height:1px;background:#fff"></div>
<div style="left:492.4px;top:345.23px;width:14px;height:1.6px;background:#6a6a6a"></div>
<div style="left:492.4px;top:346.83px;width:12.2px;height:1px;background:#fff"></div>
<div style="left:492.4px;top:364.24px;width:14px;height:1.6px;background:#6a6a6a"></div>
<div style="left:492.4px;top:365.84px;width:12.2px;height:1px;background:#fff"></div>
<div style="left:492.4px;top:383.25px;width:14px;height:1.6px;background:#6a6a6a"></div>
<div style="left:492.4px;top:384.85px;width:12.2px;height:1px;background:#fff"></div>
<div style="left:492.4px;top:402.26px;width:14px;height:1.6px;background:#6a6a6a"></div>
<div style="left:492.4px;top:403.86px;width:12.2px;height:1px;background:#fff"></div>
<div style="left:492.4px;top:421.27px;width:14px;height:1.6px;background:#6a6a6a"></div>
<div style="left:492.4px;top:422.87px;width:12.2px;height:1px;background:#fff"></div>
<div style="left:492.4px;top:440.28px;width:14px;height:1.6px;background:#6a6a6a"></div>
<div style="left:492.4px;top:441.88px;width:12.2px;height:1px;background:#fff"></div>
<div style="left:492.4px;top:459.29px;width:14px;height:1.6px;background:#6a6a6a"></div>
<div style="left:492.4px;top:460.89px;width:12.2px;height:1px;background:#fff"></div>
<div style="left:492.4px;top:478.3px;width:14px;height:1.6px;background:#6a6a6a"></div>
<div style="left:492.4px;top:479.9px;width:12.2px;height:1px;background:#fff"></div>
<div style="left:492.4px;top:497.31px;width:14px;height:1.6px;background:#6a6a6a"></div>
<div style="left:491.4px;top:515px;width:830px;height:1px;background:#b8b4a8"></div>
<span class="t" style="left:543.5px;top:71.8px;font-size:11.7px;line-height:15px;color:#666;font-weight:bold;transform:scaleX(1.0176);transform-origin:0 50%;">Actif ?</span>
<svg style="left:536px;top:71px;" width="20" height="18" viewBox="0 0 20 18"><path d="M1.5 10l5.5 5.5L18.5 1.5" fill="none" stroke="#2f6fae" stroke-width="3.2"/></svg>
<svg style="left:612px;top:73.8px;" width="15.4" height="13.86" viewBox="0 0 20 18"><rect x="1" y="0" width="18" height="2" fill="#3e78b4"/><path d="M0 3h20v5H0z" fill="#3e78b4"/><path d="M1.5 8v10h17V8" fill="#3e78b4"/><rect x="4" y="11" width="6" height="4" fill="#fff"/><rect x="12.5" y="11" width="3.5" height="7" fill="#fff"/></svg>
<svg style="left:616.3px;top:88.5px;" width="10.5" height="10.5" viewBox="0 0 10 10"><circle cx="3.2" cy="3.2" r="2.2" fill="none" stroke="#3d6fb5" stroke-width="1.8"/><path d="M5 5l4 4" stroke="#3d6fb5" stroke-width="2.2" stroke-linecap="round"/></svg>
<span class="t" style="left:702.3px;top:71.8px;font-size:11.7px;line-height:15px;color:#666;font-weight:bold;transform:scaleX(0.9200);transform-origin:0 50%;">Nom</span>
<svg style="left:803px;top:89px;" width="9" height="9" viewBox="0 0 9 9"><path d="M0 0h9l-3.3 4v5h-2.4v-5z" fill="#4a7ab5"/></svg>
<span class="t" style="left:825.5px;top:65.8px;font-size:11.7px;line-height:15px;color:#666;font-weight:bold;transform:scaleX(0.9849);transform-origin:0 50%;">Identifiant</span>
<span class="t" style="left:834.0px;top:78.8px;font-size:11.7px;line-height:15px;color:#666;font-weight:bold;transform:scaleX(0.9441);transform-origin:0 50%;">produit</span>
<svg style="left:894px;top:88px;" width="10" height="10" viewBox="0 0 10 10"><circle cx="3.2" cy="3.2" r="2.2" fill="none" stroke="#3d6fb5" stroke-width="1.8"/><path d="M5 5l4 4" stroke="#3d6fb5" stroke-width="2.2" stroke-linecap="round"/></svg>
<span class="t" style="left:907.5px;top:65.8px;font-size:11.7px;line-height:15px;color:#666;font-weight:bold;">Nom catégorie</span>
<span class="t" style="left:920.5px;top:78.8px;font-size:11.7px;line-height:15px;color:#666;font-weight:bold;transform:scaleX(0.9735);transform-origin:0 50%;">par défaut</span>
<svg style="left:991px;top:89px;" width="9" height="9" viewBox="0 0 9 9"><path d="M0 0h9l-3.3 4v5h-2.4v-5z" fill="#4a7ab5"/></svg>
<span class="t" style="left:1016.7px;top:71.8px;font-size:11.7px;line-height:15px;color:#666;font-weight:bold;transform:scaleX(1.0260);transform-origin:0 50%;">Référence</span>
<svg style="left:1088.5px;top:89px;" width="9" height="9" viewBox="0 0 9 9"><path d="M0 0h9l-3.3 4v5h-2.4v-5z" fill="#4a7ab5"/></svg>
<span class="t" style="left:1110.3px;top:65.8px;font-size:11.7px;line-height:15px;color:#666;font-weight:bold;transform:scaleX(1.0260);transform-origin:0 50%;">Référence</span>
<span class="t" style="left:1108.3px;top:78.8px;font-size:11.7px;line-height:15px;color:#666;font-weight:bold;transform:scaleX(0.9643);transform-origin:0 50%;">fournisseur</span>
<svg style="left:1180px;top:89px;" width="9" height="9" viewBox="0 0 9 9"><path d="M0 0h9l-3.3 4v5h-2.4v-5z" fill="#4a7ab5"/></svg>
<span class="t" style="left:1201.5px;top:65.8px;font-size:11.7px;line-height:15px;color:#666;font-weight:bold;transform:scaleX(0.9879);transform-origin:0 50%;">Prix d'achat</span>
<span class="t" style="left:1226.8px;top:78.8px;font-size:11.7px;line-height:15px;color:#666;font-weight:bold;transform:scaleX(0.9200);transform-origin:0 50%;">HT</span>
<svg style="left:1278px;top:88px;" width="10" height="10" viewBox="0 0 10 10"><circle cx="3.2" cy="3.2" r="2.2" fill="none" stroke="#3d6fb5" stroke-width="1.8"/><path d="M5 5l4 4" stroke="#3d6fb5" stroke-width="2.2" stroke-linecap="round"/></svg>
<div style="left:391.7px;top:520.3px;width:930px;height:4.7px;background:#808080"></div>
<div style="left:396px;top:555px;width:925px;height:253px;background:#e1e1e1"></div>
<div style="left:396px;top:555px;width:1px;height:253px;background:#b0b0b0"></div>
<div style="left:396.3px;top:527px;width:139.2px;height:28px;background:linear-gradient(#ff9a10 0,#ffc030 2.500px,#fdfdfd 3px);border-radius:4px 4px 0 0;border-left:1px solid #d8d8d8;border-right:1px solid #d8d8d8"></div>
<svg style="left:401px;top:531px;" width="15" height="20" viewBox="0 0 15 20"><path d="M0.5 0.5h9l5 5v14h-14z" fill="#fff" stroke="#8a8a8a" stroke-width="1"/><path d="M9.5 0.5v5h5" fill="#e8e8e8" stroke="#8a8a8a" stroke-width="1"/><path d="M3 8h9M3 11h9M3 14h9M3 17h9" stroke="#3a7bc8" stroke-width="1.4"/><path d="M3 4.5h3" stroke="#3a7bc8" stroke-width="1.2"/></svg>
<span class="t" style="left:431.0px;top:532.0px;font-size:14px;line-height:18px;color:#ff7f00;font-weight:bold;transform:scaleX(1.0150);transform-origin:0 50%;">Fiche produit</span>
<div style="left:535.4px;top:530.5px;width:12px;height:24.5px;background:#fafafa;border:1px solid #9aaabf;border-bottom:none"></div>
<div style="left:539px;top:538.4px;width:8px;height:13px;background:#2d6bd0"></div>
<div class="btn" style="left:400px;top:558px;width:75px;height:20.5px;"></div>
<svg style="left:402px;top:560px;" width="24" height="17" viewBox="0 0 24 17"><path d="M0.700 6C6 -0.800 17.500 -0.800 23.300 5.500" fill="none" stroke="#8c8c8c" stroke-width="1.400"/><path d="M2.600 9.800C6.500 2.800 16.800 2.800 21 9.300C17 16.800 6.500 16.800 2.600 9.800z" fill="#fff" stroke="#8c8c8c" stroke-width="1.500"/><circle cx="11.900" cy="9.300" r="4.300" fill="#3d7fc8"/><circle cx="10.200" cy="7.500" r="1.400" fill="#fff"/></svg>
<span class="t" style="left:428.2px;top:560.5px;font-size:11.7px;line-height:15px;color:#000;transform:scaleX(0.9200);transform-origin:0 50%;">Affichage</span>
<div class="btnd" style="left:399px;top:584.7px;width:87px;height:20px;"></div>
<svg style="left:402.5px;top:587px;" width="14" height="16" viewBox="0 0 14 16"><path d="M9.200 0.800L0.800 7.800L9.200 14.700L13.700 12.400L7.700 7.800L13.700 3z" fill="#fff" stroke="#3c3c3c" stroke-width="1.200" stroke-linejoin="round"/></svg>
<span class="t" style="left:426.0px;top:586.5px;font-size:11.7px;line-height:15px;color:#9a9a9a;transform:scaleX(0.9200);transform-origin:0 50%;">Précédent</span>
<div class="btnd" style="left:491.7px;top:584.7px;width:60px;height:20px;"></div>
<span class="t" style="left:502.6px;top:586.5px;font-size:11.7px;line-height:15px;color:#9a9a9a;transform:scaleX(0.9200);transform-origin:0 50%;">Suivant</span>
<div class="btnd" style="left:399px;top:607.5px;width:18px;height:19px;"></div>
<svg style="left:401.5px;top:609px;" width="14" height="16" viewBox="0 0 14 16"><path d="M9.200 0.800L0.800 7.800L9.200 14.700L13.700 12.400L7.700 7.800L13.700 3z" fill="#fff" stroke="#3c3c3c" stroke-width="1.200" stroke-linejoin="round"/></svg>
<div class="tb" style="left:420px;top:607.5px;width:130px;height:18.7px;"></div>
<span class="t" style="left:422.5px;top:608.0px;font-size:11.7px;line-height:15px;color:#9a9a9a;transform:scaleX(0.8804);transform-origin:0 50%;">Français (French)</span>
<div class="dd" style="left:536px;top:609px;width:14px;height:16px;"></div>
<div class="btnd" style="left:400.6px;top:690.8px;width:87.6px;height:27px;"></div>
<svg style="left:402px;top:696px;" width="16" height="16" viewBox="0 0 16 16"><path d="M0.5 15.5V0.5h11l4 4v11z" fill="#c8c8c8"/><rect x="3.5" y="0.5" width="6" height="4.5" fill="#fff"/><rect x="2.5" y="8" width="11" height="7.5" fill="#fff"/><path d="M3.5 10.5h9M3.5 13h9" stroke="#c0c0c0" stroke-width="1"/></svg>
<span class="t" style="left:435.5px;top:696.5px;font-size:11.7px;line-height:15px;color:#9a9a9a;transform:scaleX(0.9200);transform-origin:0 50%;">Sauver</span>
<svg style="left:491.5px;top:694px;" width="12" height="12" viewBox="0 0 12 12"><path d="M6 0.8L11.2 6L6 11.2L0.8 6z" fill="#e8e8e8" stroke="#3a4868" stroke-width="1.1"/></svg>
<span class="t" style="left:511.0px;top:693.0px;font-size:11.7px;line-height:15px;color:#a0a0a0;transform:scaleX(0.9200);transform-origin:0 50%;">Sauvegarde</span>
<span class="t" style="left:511.0px;top:706.0px;font-size:11.7px;line-height:15px;color:#a0a0a0;transform:scaleX(0.9200);transform-origin:0 50%;">automatique</span>
<svg style="left:401.7px;top:727.7px;" width="300" height="81" viewBox="0 0 300 81"><rect x="0.500" y="0.500" width="299" height="90" fill="#e2e2e2" stroke="#b4b4b4" stroke-width="1"/><path d="M11.500 26Q11.500 19 18 16.500L44 3.500Q49 2 56 3.500L150 19V82H11.500z" fill="#e7eaee"/><path d="M11.500 82V26Q11.500 19 18 16.500L44 3.500Q49 2 56 3.500L150 19" fill="none" stroke="#cdd3dc" stroke-width="1.300"/><path d="M14 24Q30 12 50 8L150 25V33L50 16Q30 19 14 32z" fill="#f1f2f4"/><path d="M17 36Q17 31 23 29.500L58 24L150 38V82H17z" fill="#eceef1"/><path d="M17 82V36Q17 31 23 29.500L58 24L150 38" fill="none" stroke="#dadfe6" stroke-width="1.200"/><path d="M25 35L54 38L55 52L26 50z" fill="#dfe3ea"/><path d="M54.500 42l2.500 0.300l0.500 12l-2.500-0.300z" fill="#b4bfd0"/><ellipse cx="92" cy="84" rx="52" ry="36" fill="#f2f2f3"/><ellipse cx="96" cy="92" rx="36" ry="22" fill="none" stroke="#dfe3e9" stroke-width="3"/><circle cx="129.800" cy="58.500" r="11.500" fill="#e4e9ef"/><circle cx="129.800" cy="58.500" r="9.300" fill="none" stroke="#9bb1c9" stroke-width="2.600"/><circle cx="130.300" cy="58.500" r="6.200" fill="#858585"/><circle cx="131.500" cy="55.500" r="1.700" fill="#fff"/></svg>
<div style="left:1308px;top:498px;width:13px;height:22px;background:repeating-linear-gradient(#fff 0 3px,#d0d0d0 3px 5px)"></div>
<div style="left:1308px;top:525px;width:13px;height:6px;background:#fff"></div>
<div style="left:1308px;top:531px;width:13px;height:21px;background:#f3f3f3;border-top:1px solid #c8c8c8"></div>
<span class="t" style="left:1310.0px;top:531.0px;font-size:15px;line-height:20px;color:#666;font-weight:bold;">ag</span>
<div style="left:1308px;top:586px;width:13px;height:8px;background:#c4c4c4"></div>
<div style="left:1308px;top:594px;width:13px;height:36px;background:#fff"></div>
<div style="left:1308px;top:630px;width:13px;height:155px;background:#c0c0c0"></div>
<span class="t" style="left:1311.0px;top:636.0px;font-size:14px;line-height:18px;color:#eee;">é</span>
<div style="left:650px;top:785px;width:672px;height:23px;background:#c0c0c0"></div>
<div style="left:1215px;top:785px;width:106px;height:18px;background:#fff"></div>
<div style="left:820px;top:790px;width:134px;height:13px;background:#fff"></div>
<div style="left:647.5px;top:727px;width:1px;height:81px;background:#a8a8a8"></div>
<div style="left:543.4px;top:166.7px;width:765.6px;height:630.3px;background:#1e1e1e;border-radius:6px 6px 0 0"></div>
<div style="left:544.4px;top:167.7px;width:763.6px;height:29px;background:linear-gradient(#6e6e6e 0%,#5a5a5a 42%,#3a3a3a 50%,#222 100%);border-radius:5px 5px 0 0"></div>
<div style="left:547.3px;top:195.8px;width:757.5px;height:597.4px;background:#e3e3e3"></div>
<div style="left:544.2px;top:195.8px;width:1.2px;height:600px;background:#7a7a7a"></div>
<div style="left:1306.5px;top:195.8px;width:1px;height:600px;background:#6a6a6a"></div>
<div style="left:544.4px;top:794.5px;width:763.6px;height:1px;background:#6a6a6a"></div>
<svg style="left:543.4px;top:166.5px;" width="44" height="40" viewBox="0 0 44 40"><path d="M19 5.500l3-2l1-1.500l2 0.500l2-0.500l2 1.500l0.500 2.500l1.500 1.500l-1 1.500l-2 1l-1-2l-2-1.500l-2 1l-0.500 1.500l-1-2l-2.500-0.500z" fill="#efa22f"/><path d="M30 11l3-2l2 1.500l4-0.500l1 2v5l-1 3l-1 3h-2l0.500-3h-3.500l1.500-2.500l1.500-0.500v-4h-3l-3-0.500z" fill="#3a7fd5"/><g fill="none" stroke="#f2f2f2" stroke-width="1.250" stroke-linejoin="round" stroke-linecap="round"><path d="M17.500 11.500l-4 1.500l-5 2.500l1.500 8l2.500 7l5.500 5.500l6-2l7.500-5.500l-1-5.500l-4.500-5.500l-5 1"/><path d="M11.500 13.500l2 9.500l3 7.500l2 5"/><path d="M9 20l5-2.500M10.500 25l4-1.500M12.500 30.500l3.500-1.500"/><path d="M13.500 22.500l7-3.500l5.500-1M15.500 28l6.500-3l8-1.500M17.500 33l6-3l7-1.500"/><path d="M20.500 17l1 8.500l2 8.500M25.500 18l1.500 6l2 5.500"/><path d="M13 13l4 2.500l0.500-4"/></g><path d="M4 29.500l4 0.500l-3 2.500z" fill="#f2f2f2"/></svg>
<span class="t" style="left:594.5px;top:175.5px;font-size:12px;line-height:16px;color:#fff;font-family:'DejaVu Sans Condensed','Liberation Sans',sans-serif;-webkit-text-stroke:0.300px #fff;">Ajout en masse de nouveaux produits</span>
<span class="t" style="left:803.5px;top:175.5px;font-size:12px;line-height:16px;color:#fff;font-family:'DejaVu Sans Condensed','Liberation Sans',sans-serif;-webkit-text-stroke:0.300px #fff;">-</span>
<span class="t" style="left:814.0px;top:175.5px;font-size:12px;line-height:16px;color:#fff;font-family:'DejaVu Sans Condensed','Liberation Sans',sans-serif;transform:scaleX(1.0173);transform-origin:0 50%;-webkit-text-stroke:0.300px #fff;">Version:</span>
<span class="t" style="left:865.5px;top:175.5px;font-size:12px;line-height:16px;color:#fff;font-family:'DejaVu Sans Condensed','Liberation Sans',sans-serif;transform:scaleX(0.9708);transform-origin:0 50%;-webkit-text-stroke:0.300px #fff;">1.5.1.a.build2.64b</span>
<span class="t" style="left:976.0px;top:175.5px;font-size:12px;line-height:16px;color:#fff;font-family:'DejaVu Sans Condensed','Liberation Sans',sans-serif;transform:scaleX(0.9263);transform-origin:0 50%;-webkit-text-stroke:0.300px #fff;">SITE: PS17700beta</span>
<div style="left:1282.3px;top:171.3px;width:19.5px;height:19.5px;border-radius:3px;border:1px solid #f4a58f;background:linear-gradient(#ee8a6e 0%,#e8623f 45%,#dc3808 50%,#e0522a 100%)"></div>
<svg style="left:1286.5px;top:175.5px;" width="11" height="11" viewBox="0 0 11 11"><path d="M1 1l9 9M10 1l-9 9" stroke="#fff" stroke-width="2.2" stroke-linecap="round"/></svg>
<span class="t" style="left:696.0px;top:207.4px;font-size:11.7px;line-height:15px;color:#000;transform:scaleX(0.9170);transform-origin:0 50%;">Attention, le mode "Modification multi-boutiques" n'étant pas activé, chaque</span>
<span class="t" style="left:696.0px;top:220.4px;font-size:11.7px;line-height:15px;color:#000;transform:scaleX(0.8969);transform-origin:0 50%;">boutique se verra créé ses propres produits indépendants les uns des autres, même</span>
<span class="t" style="left:696.0px;top:233.4px;font-size:11.7px;line-height:15px;color:#000;transform:scaleX(0.8788);transform-origin:0 50%;">si ils ont les mêmes propriétés.</span>
<span class="t" style="left:696.0px;top:246.4px;font-size:11.7px;line-height:15px;color:#000;transform:scaleX(0.8976);transform-origin:0 50%;">Pour créer des produits communs à plusieurs boutiques, abandonnez maintenant la</span>
<span class="t" style="left:696.0px;top:259.4px;font-size:11.7px;line-height:15px;color:#000;transform:scaleX(0.9200);transform-origin:0 50%;">création pour activer cette option.</span>
<span class="t" style="left:685.3px;top:290.0px;font-size:11.7px;line-height:15px;color:#000;transform:scaleX(0.9200);transform-origin:0 50%;">Début</span>
<span class="t" style="left:862.5px;top:290.0px;font-size:11.7px;line-height:15px;color:#000;transform:scaleX(0.9200);transform-origin:0 50%;">Milieu</span>
<span class="t" style="left:1069.0px;top:290.0px;font-size:11.7px;line-height:15px;color:#000;transform:scaleX(0.9200);transform-origin:0 50%;">Fin</span>
<span class="t" style="left:589.4px;top:307.5px;font-size:16px;line-height:21px;color:#5b6fa8;font-weight:bold;">Nom &amp; URL</span>
<div class="tb" style="left:684.7px;top:306.3px;width:97px;height:20.8px;"></div>
<span class="t" style="left:687.5px;top:307.0px;font-size:11.7px;line-height:15px;color:#000;transform:scaleX(0.9199);transform-origin:0 50%;">Mon NOM</span>
<svg style="left:785.3px;top:312.3px;" width="8.4" height="8.4" viewBox="0 0 8.4 8.4"><path d="M4.200 0v8.400M0 4.200h8.400" stroke="#000" stroke-width="1.900"/></svg>
<div class="cb" style="left:800.4px;top:310.6px;width:13px;height:13px;"></div>
<span class="t" style="left:819.2px;top:308.7px;font-size:11.7px;line-height:15px;color:#000;transform:scaleX(0.8829);transform-origin:0 50%;">Marque</span>
<div class="tb" style="left:862px;top:306.3px;width:96.6px;height:20.8px;"></div>
<svg style="left:963.8px;top:312.3px;" width="8.4" height="8.4" viewBox="0 0 8.4 8.4"><path d="M4.200 0v8.400M0 4.200h8.400" stroke="#000" stroke-width="1.900"/></svg>
<div class="cb" style="left:982.2px;top:310.6px;width:13px;height:13px;"></div>
<span class="t" style="left:1000.4px;top:308.7px;font-size:11.7px;line-height:15px;color:#000;transform:scaleX(0.8878);transform-origin:0 50%;">Catégorie</span>
<svg style="left:1053.8px;top:312.3px;" width="8.4" height="8.4" viewBox="0 0 8.4 8.4"><path d="M4.200 0v8.400M0 4.200h8.400" stroke="#000" stroke-width="1.900"/></svg>
<div class="tb" style="left:1068.8px;top:306.3px;width:97.1px;height:20.8px;"></div>
<svg style="left:1171.8px;top:312.3px;" width="8.4" height="8.4" viewBox="0 0 8.4 8.4"><path d="M4.200 0v8.400M0 4.200h8.400" stroke="#000" stroke-width="1.900"/></svg>
<div class="cb" style="left:1187px;top:310.6px;width:13px;height:13px;"></div>
<span class="t" style="left:1206.3px;top:308.7px;font-size:11.7px;line-height:15px;color:#000;transform:scaleX(0.8878);transform-origin:0 50%;">Identifiant</span>
<div class="cb" style="left:686.3px;top:338.4px;width:13px;height:13px;"></div>
<svg style="left:688.8px;top:341.4px;" width="8" height="7" viewBox="0 0 8 7"><path d="M0.300 3.400L2.800 6.400L7.400 0.600" fill="none" stroke="#1fb11f" stroke-width="2.200"/></svg>
<span class="t" style="left:705.0px;top:336.7px;font-size:11.7px;line-height:15px;color:#000;transform:scaleX(0.8915);transform-origin:0 50%;">Mettre la même valeur que le nom final dans la balise titre</span>
<span class="t" style="left:588.5px;top:369.0px;font-size:11.7px;line-height:15px;color:#000;transform:scaleX(0.9068);transform-origin:0 50%;">Fabricant /marque</span>
<div class="tb" style="left:684px;top:368.3px;width:152px;height:18.5px;"></div>
<div class="dd" style="left:820.5px;top:369.8px;width:14px;height:15.5px;"></div>
<svg style="left:823.5px;top:375.55px;" width="8" height="5" viewBox="0 0 8 5"><path d="M0 0h8l-4 4.500z" fill="#000"/></svg>
<span class="t" style="left:588.5px;top:397.4px;font-size:11.7px;line-height:15px;color:#000;transform:scaleX(0.8812);transform-origin:0 50%;">Fournisseur (Def.)</span>
<div class="tb" style="left:684px;top:396.3px;width:152px;height:19px;"></div>
<div class="dd" style="left:820.5px;top:397.8px;width:14px;height:16px;"></div>
<svg style="left:823.5px;top:403.8px;" width="8" height="5" viewBox="0 0 8 5"><path d="M0 0h8l-4 4.500z" fill="#000"/></svg>
<span class="t" style="left:588.5px;top:424.0px;font-size:11.7px;line-height:15px;color:#000;transform:scaleX(0.9053);transform-origin:0 50%;">Prix d'achat HT</span>
<div class="tb" style="left:684px;top:423.2px;width:151px;height:20.7px;"></div>
<svg style="left:821px;top:425.4px;" width="12" height="16" viewBox="0 0 12 16"><rect x="0.5" y="0.5" width="11" height="15" rx="1.2" fill="#dfeaf6" stroke="#4f8fd6" stroke-width="1"/><path d="M0.5 6v9a0.7 0.7 0 0 0 0.7 0.5h9.6a0.7 0.7 0 0 0 0.7-0.5" fill="none" stroke="#2f72c4" stroke-width="1"/><rect x="1.3" y="1.3" width="9.4" height="4.2" fill="#fff"/><rect x="1" y="5.8" width="10" height="9.4" fill="#e6eaee"/><rect x="2.0" y="6.8" width="2.1" height="2" fill="#5d9be0"/><rect x="5.0" y="6.8" width="2.1" height="2" fill="#5d9be0"/><rect x="8.0" y="6.8" width="2.1" height="2" fill="#5d9be0"/><rect x="2.0" y="9.7" width="2.1" height="2" fill="#c9cdd2"/><rect x="5.0" y="9.7" width="2.1" height="2" fill="#c9cdd2"/><rect x="8.0" y="9.7" width="2.1" height="2" fill="#c9cdd2"/><rect x="2.0" y="12.6" width="2.1" height="2" fill="#c9cdd2"/><rect x="5.0" y="12.6" width="2.1" height="2" fill="#c9cdd2"/><rect x="8.0" y="12.6" width="2.1" height="2" fill="#c9cdd2"/><ellipse cx="8.6" cy="3.3" rx="1.1" ry="1.5" fill="none" stroke="#111" stroke-width="0.9"/></svg>
<span class="t" style="left:686.5px;top:425.4px;font-size:11.7px;line-height:15px;color:#000;transform:scaleX(0.9200);transform-origin:0 50%;">0.000000</span>
<span class="t" style="left:588.5px;top:452.0px;font-size:11.7px;line-height:15px;color:#000;transform:scaleX(0.9076);transform-origin:0 50%;">Prix de vente HT</span>
<div class="tb" style="left:684px;top:451.5px;width:151px;height:19.5px;"></div>
<svg style="left:821px;top:453.7px;" width="12" height="16" viewBox="0 0 12 16"><rect x="0.5" y="0.5" width="11" height="15" rx="1.2" fill="#dfeaf6" stroke="#4f8fd6" stroke-width="1"/><path d="M0.5 6v9a0.7 0.7 0 0 0 0.7 0.5h9.6a0.7 0.7 0 0 0 0.7-0.5" fill="none" stroke="#2f72c4" stroke-width="1"/><rect x="1.3" y="1.3" width="9.4" height="4.2" fill="#fff"/><rect x="1" y="5.8" width="10" height="9.4" fill="#e6eaee"/><rect x="2.0" y="6.8" width="2.1" height="2" fill="#5d9be0"/><rect x="5.0" y="6.8" width="2.1" height="2" fill="#5d9be0"/><rect x="8.0" y="6.8" width="2.1" height="2" fill="#5d9be0"/><rect x="2.0" y="9.7" width="2.1" height="2" fill="#c9cdd2"/><rect x="5.0" y="9.7" width="2.1" height="2" fill="#c9cdd2"/><rect x="8.0" y="9.7" width="2.1" height="2" fill="#c9cdd2"/><rect x="2.0" y="12.6" width="2.1" height="2" fill="#c9cdd2"/><rect x="5.0" y="12.6" width="2.1" height="2" fill="#c9cdd2"/><rect x="8.0" y="12.6" width="2.1" height="2" fill="#c9cdd2"/><ellipse cx="8.6" cy="3.3" rx="1.1" ry="1.5" fill="none" stroke="#111" stroke-width="0.9"/></svg>
<span class="t" style="left:686.5px;top:453.1px;font-size:11.7px;line-height:15px;color:#000;transform:scaleX(0.9200);transform-origin:0 50%;">0.000000</span>
<span class="t" style="left:588.5px;top:482.2px;font-size:11.7px;line-height:15px;color:#000;transform:scaleX(0.8547);transform-origin:0 50%;">Poids</span>
<div class="tb" style="left:684px;top:481.7px;width:151px;height:19.7px;"></div>
<svg style="left:821px;top:483.9px;" width="12" height="16" viewBox="0 0 12 16"><rect x="0.5" y="0.5" width="11" height="15" rx="1.2" fill="#dfeaf6" stroke="#4f8fd6" stroke-width="1"/><path d="M0.5 6v9a0.7 0.7 0 0 0 0.7 0.5h9.6a0.7 0.7 0 0 0 0.7-0.5" fill="none" stroke="#2f72c4" stroke-width="1"/><rect x="1.3" y="1.3" width="9.4" height="4.2" fill="#fff"/><rect x="1" y="5.8" width="10" height="9.4" fill="#e6eaee"/><rect x="2.0" y="6.8" width="2.1" height="2" fill="#5d9be0"/><rect x="5.0" y="6.8" width="2.1" height="2" fill="#5d9be0"/><rect x="8.0" y="6.8" width="2.1" height="2" fill="#5d9be0"/><rect x="2.0" y="9.7" width="2.1" height="2" fill="#c9cdd2"/><rect x="5.0" y="9.7" width="2.1" height="2" fill="#c9cdd2"/><rect x="8.0" y="9.7" width="2.1" height="2" fill="#c9cdd2"/><rect x="2.0" y="12.6" width="2.1" height="2" fill="#c9cdd2"/><rect x="5.0" y="12.6" width="2.1" height="2" fill="#c9cdd2"/><rect x="8.0" y="12.6" width="2.1" height="2" fill="#c9cdd2"/><ellipse cx="8.6" cy="3.3" rx="1.1" ry="1.5" fill="none" stroke="#111" stroke-width="0.9"/></svg>
<span class="t" style="left:686.5px;top:483.4px;font-size:11.7px;line-height:15px;color:#000;transform:scaleX(0.9200);transform-origin:0 50%;">0.0000</span>
<span class="t" style="left:588.5px;top:518.5px;font-size:11.7px;line-height:15px;color:#000;transform:scaleX(0.8930);transform-origin:0 50%;">Date de disponibilité</span>
<div class="tb" style="left:684px;top:518.4px;width:150.5px;height:18.3px;"></div>
<svg style="left:818.5px;top:519.5px;" width="14" height="16" viewBox="0 0 14 16"><path d="M0.5 1.5h13v11l-3 3h-10z" fill="#fff" stroke="#8aa" stroke-width="1"/><path d="M2 3.5h10" stroke="#889" stroke-width="1.2"/><path d="M2 2l1.5 1.5M12 2l-1.5 1.5" stroke="#556" stroke-width="0.8"/><rect x="2.0" y="6.0" width="1.5" height="1.3" fill="#6d9bd6"/><rect x="4.6" y="6.0" width="1.5" height="1.3" fill="#6d9bd6"/><rect x="7.2" y="6.0" width="1.5" height="1.3" fill="#6d9bd6"/><rect x="9.8" y="6.0" width="1.5" height="1.3" fill="#6d9bd6"/><rect x="2.0" y="8.4" width="1.5" height="1.3" fill="#6d9bd6"/><rect x="4.6" y="8.4" width="1.5" height="1.3" fill="#6d9bd6"/><rect x="7.2" y="8.4" width="1.5" height="1.3" fill="#6d9bd6"/><rect x="9.8" y="8.4" width="1.5" height="1.3" fill="#6d9bd6"/><rect x="2.0" y="10.8" width="1.5" height="1.3" fill="#6d9bd6"/><rect x="4.6" y="10.8" width="1.5" height="1.3" fill="#6d9bd6"/><rect x="7.2" y="10.8" width="1.5" height="1.3" fill="#6d9bd6"/><rect x="9.8" y="10.8" width="1.5" height="1.3" fill="#6d9bd6"/></svg>
<span class="t" style="left:588.5px;top:544.9px;font-size:11.7px;line-height:15px;color:#000;transform:scaleX(0.9091);transform-origin:0 50%;">Quantité (stock)</span>
<div class="tb" style="left:684px;top:544.7px;width:151px;height:19.7px;"></div>
<svg style="left:821px;top:546.9px;" width="12" height="16" viewBox="0 0 12 16"><rect x="0.5" y="0.5" width="11" height="15" rx="1.2" fill="#dfeaf6" stroke="#4f8fd6" stroke-width="1"/><path d="M0.5 6v9a0.7 0.7 0 0 0 0.7 0.5h9.6a0.7 0.7 0 0 0 0.7-0.5" fill="none" stroke="#2f72c4" stroke-width="1"/><rect x="1.3" y="1.3" width="9.4" height="4.2" fill="#fff"/><rect x="1" y="5.8" width="10" height="9.4" fill="#e6eaee"/><rect x="2.0" y="6.8" width="2.1" height="2" fill="#5d9be0"/><rect x="5.0" y="6.8" width="2.1" height="2" fill="#5d9be0"/><rect x="8.0" y="6.8" width="2.1" height="2" fill="#5d9be0"/><rect x="2.0" y="9.7" width="2.1" height="2" fill="#c9cdd2"/><rect x="5.0" y="9.7" width="2.1" height="2" fill="#c9cdd2"/><rect x="8.0" y="9.7" width="2.1" height="2" fill="#c9cdd2"/><rect x="2.0" y="12.6" width="2.1" height="2" fill="#c9cdd2"/><rect x="5.0" y="12.6" width="2.1" height="2" fill="#c9cdd2"/><rect x="8.0" y="12.6" width="2.1" height="2" fill="#c9cdd2"/><ellipse cx="8.6" cy="3.3" rx="1.1" ry="1.5" fill="none" stroke="#111" stroke-width="0.9"/></svg>
<span class="t" style="left:686.5px;top:546.4px;font-size:11.7px;line-height:15px;color:#000;transform:scaleX(0.9200);transform-origin:0 50%;">0</span>
<div class="cb" style="left:688.4px;top:576.5px;width:13px;height:13px;"></div>
<span class="t" style="left:707.5px;top:574.7px;font-size:11.7px;line-height:15px;color:#000;transform:scaleX(0.8712);transform-origin:0 50%;">M'alerter par email</span>
<span class="t" style="left:588.5px;top:601.4px;font-size:11.7px;line-height:15px;color:#000;transform:scaleX(0.8655);transform-origin:0 50%;">Etat</span>
<div class="tb" style="left:684px;top:600.3px;width:150.5px;height:19.2px;"></div>
<div class="dd" style="left:819px;top:601.8px;width:14px;height:16.2px;"></div>
<svg style="left:822px;top:607.9px;" width="8" height="5" viewBox="0 0 8 5"><path d="M0 0h8l-4 4.500z" fill="#000"/></svg>
<span class="t" style="left:686.5px;top:601.4px;font-size:11.7px;line-height:15px;color:#000;transform:scaleX(0.9189);transform-origin:0 50%;">Nouveau</span>
<div class="cb" style="left:688.4px;top:632.4px;width:13px;height:13px;"></div>
<span class="t" style="left:707.5px;top:631.0px;font-size:11.7px;line-height:15px;color:#000;font-weight:bold;transform:scaleX(1.0116);transform-origin:0 50%;">Activé</span>
<span class="t" style="left:864.0px;top:369.0px;font-size:11.7px;line-height:15px;color:#000;transform:scaleX(0.9085);transform-origin:0 50%;">Référence</span>
<div class="tb" style="left:963px;top:368.3px;width:203px;height:19.2px;"></div>
<svg style="left:1171.8px;top:373.8px;" width="8.4" height="8.4" viewBox="0 0 8.4 8.4"><path d="M4.200 0v8.400M0 4.200h8.400" stroke="#000" stroke-width="1.900"/></svg>
<div class="cb" style="left:1187px;top:372.5px;width:13px;height:13px;"></div>
<span class="t" style="left:1206.3px;top:371.0px;font-size:11.7px;line-height:15px;color:#000;transform:scaleX(0.8878);transform-origin:0 50%;">Identifiant</span>
<span class="t" style="left:864.0px;top:397.4px;font-size:11.7px;line-height:15px;color:#000;transform:scaleX(0.8970);transform-origin:0 50%;">Réf. fournisseur</span>
<div class="tb" style="left:963px;top:396.4px;width:203px;height:19.2px;"></div>
<svg style="left:1171.8px;top:401.3px;" width="8.4" height="8.4" viewBox="0 0 8.4 8.4"><path d="M4.200 0v8.400M0 4.200h8.400" stroke="#000" stroke-width="1.900"/></svg>
<div class="cb" style="left:1187px;top:399.5px;width:13px;height:13px;"></div>
<span class="t" style="left:1206.3px;top:398.0px;font-size:11.7px;line-height:15px;color:#000;transform:scaleX(0.8878);transform-origin:0 50%;">Identifiant</span>
<span class="t" style="left:864.0px;top:424.7px;font-size:11.7px;line-height:15px;color:#000;transform:scaleX(0.8851);transform-origin:0 50%;">MPN</span>
<div class="tb" style="left:963px;top:424.4px;width:203px;height:19.2px;"></div>
<span class="t" style="left:864.0px;top:455.0px;font-size:11.7px;line-height:15px;color:#000;transform:scaleX(0.8935);transform-origin:0 50%;">Groupe de taxe</span>
<div class="tb" style="left:963px;top:454px;width:203px;height:18.6px;"></div>
<div class="dd" style="left:1150.5px;top:455.5px;width:14px;height:15.6px;"></div>
<svg style="left:1153.5px;top:461.3px;" width="8" height="5" viewBox="0 0 8 5"><path d="M0 0h8l-4 4.500z" fill="#000"/></svg>
<div class="cb" style="left:1187px;top:457.6px;width:13px;height:13px;"></div>
<svg style="left:1189.5px;top:460.6px;" width="8" height="7" viewBox="0 0 8 7"><path d="M0.300 3.400L2.800 6.400L7.400 0.600" fill="none" stroke="#1fb11f" stroke-width="2.200"/></svg>
<span class="t" style="left:1206.3px;top:456.0px;font-size:11.7px;line-height:15px;color:#000;transform:scaleX(0.8593);transform-origin:0 50%;">Prix visible</span>
<span class="t" style="left:864.0px;top:484.7px;font-size:11.7px;line-height:15px;color:#000;transform:scaleX(0.8815);transform-origin:0 50%;">Emplacement</span>
<div class="tb" style="left:963px;top:484.5px;width:203px;height:19.2px;"></div>
<div class="cb" style="left:1187px;top:489.4px;width:13px;height:13px;"></div>
<span class="t" style="left:1206.3px;top:488.0px;font-size:11.7px;line-height:15px;color:#000;transform:scaleX(0.9274);transform-origin:0 50%;">Logo "En solde"</span>
<span class="t" style="left:864.0px;top:516.0px;font-size:11.7px;line-height:15px;color:#000;transform:scaleX(0.8996);transform-origin:0 50%;">En cas de rupture</span>
<div class="tb" style="left:963px;top:514.8px;width:203px;height:21.2px;"></div>
<div class="dd" style="left:1150.5px;top:516.3px;width:14px;height:18.2px;"></div>
<svg style="left:1153.5px;top:523.4px;" width="8" height="5" viewBox="0 0 8 5"><path d="M0 0h8l-4 4.500z" fill="#000"/></svg>
<span class="t" style="left:965.5px;top:516.9px;font-size:11.7px;line-height:15px;color:#000;transform:scaleX(0.8970);transform-origin:0 50%;">2 Par défaut (défini dans préférences)</span>
<div class="cb" style="left:1187px;top:520.8px;width:13px;height:13px;"></div>
<svg style="left:1189.5px;top:523.8px;" width="8" height="7" viewBox="0 0 8 7"><path d="M0.300 3.400L2.800 6.400L7.400 0.600" fill="none" stroke="#1fb11f" stroke-width="2.200"/></svg>
<span class="t" style="left:1206.3px;top:519.0px;font-size:11.7px;line-height:15px;color:#000;transform:scaleX(0.8682);transform-origin:0 50%;">Commandable</span>
<span class="t" style="left:864.0px;top:545.0px;font-size:11.7px;line-height:15px;color:#000;transform:scaleX(0.8811);transform-origin:0 50%;">Quantité minimale</span>
<div class="tb" style="left:963px;top:544.3px;width:203px;height:21.2px;"></div>
<svg style="left:1152px;top:546.5px;" width="12" height="16" viewBox="0 0 12 16"><rect x="0.5" y="0.5" width="11" height="15" rx="1.2" fill="#dfeaf6" stroke="#4f8fd6" stroke-width="1"/><path d="M0.5 6v9a0.7 0.7 0 0 0 0.7 0.5h9.6a0.7 0.7 0 0 0 0.7-0.5" fill="none" stroke="#2f72c4" stroke-width="1"/><rect x="1.3" y="1.3" width="9.4" height="4.2" fill="#fff"/><rect x="1" y="5.8" width="10" height="9.4" fill="#e6eaee"/><rect x="2.0" y="6.8" width="2.1" height="2" fill="#5d9be0"/><rect x="5.0" y="6.8" width="2.1" height="2" fill="#5d9be0"/><rect x="8.0" y="6.8" width="2.1" height="2" fill="#5d9be0"/><rect x="2.0" y="9.7" width="2.1" height="2" fill="#c9cdd2"/><rect x="5.0" y="9.7" width="2.1" height="2" fill="#c9cdd2"/><rect x="8.0" y="9.7" width="2.1" height="2" fill="#c9cdd2"/><rect x="2.0" y="12.6" width="2.1" height="2" fill="#c9cdd2"/><rect x="5.0" y="12.6" width="2.1" height="2" fill="#c9cdd2"/><rect x="8.0" y="12.6" width="2.1" height="2" fill="#c9cdd2"/><ellipse cx="8.6" cy="3.3" rx="1.1" ry="1.5" fill="none" stroke="#111" stroke-width="0.9"/></svg>
<span class="t" style="left:965.5px;top:546.7px;font-size:11.7px;line-height:15px;color:#000;transform:scaleX(0.9200);transform-origin:0 50%;">0</span>
<div class="cb" style="left:1187px;top:551.3px;width:13px;height:13px;"></div>
<span class="t" style="left:1206.3px;top:550.0px;font-size:11.7px;line-height:15px;color:#000;transform:scaleX(0.8815);transform-origin:0 50%;">Produit virtuel</span>
<span class="t" style="left:864.0px;top:575.5px;font-size:11.7px;line-height:15px;color:#000;transform:scaleX(0.9311);transform-origin:0 50%;">Niveau de stock bas</span>
<div class="tb" style="left:963px;top:574.3px;width:203px;height:20.8px;"></div>
<svg style="left:1152px;top:576.5px;" width="12" height="16" viewBox="0 0 12 16"><rect x="0.5" y="0.5" width="11" height="15" rx="1.2" fill="#dfeaf6" stroke="#4f8fd6" stroke-width="1"/><path d="M0.5 6v9a0.7 0.7 0 0 0 0.7 0.5h9.6a0.7 0.7 0 0 0 0.7-0.5" fill="none" stroke="#2f72c4" stroke-width="1"/><rect x="1.3" y="1.3" width="9.4" height="4.2" fill="#fff"/><rect x="1" y="5.8" width="10" height="9.4" fill="#e6eaee"/><rect x="2.0" y="6.8" width="2.1" height="2" fill="#5d9be0"/><rect x="5.0" y="6.8" width="2.1" height="2" fill="#5d9be0"/><rect x="8.0" y="6.8" width="2.1" height="2" fill="#5d9be0"/><rect x="2.0" y="9.7" width="2.1" height="2" fill="#c9cdd2"/><rect x="5.0" y="9.7" width="2.1" height="2" fill="#c9cdd2"/><rect x="8.0" y="9.7" width="2.1" height="2" fill="#c9cdd2"/><rect x="2.0" y="12.6" width="2.1" height="2" fill="#c9cdd2"/><rect x="5.0" y="12.6" width="2.1" height="2" fill="#c9cdd2"/><rect x="8.0" y="12.6" width="2.1" height="2" fill="#c9cdd2"/><ellipse cx="8.6" cy="3.3" rx="1.1" ry="1.5" fill="none" stroke="#111" stroke-width="0.9"/></svg>
<span class="t" style="left:965.5px;top:576.5px;font-size:11.7px;line-height:15px;color:#000;transform:scaleX(0.9200);transform-origin:0 50%;">0</span>
<span class="t" style="left:864.0px;top:603.0px;font-size:11.7px;line-height:15px;color:#000;transform:scaleX(0.8436);transform-origin:0 50%;">Visibilité</span>
<div class="tb" style="left:963px;top:601.9px;width:203px;height:19.2px;"></div>
<div class="dd" style="left:1150.5px;top:603.4px;width:14px;height:16.2px;"></div>
<svg style="left:1153.5px;top:609.5px;" width="8" height="5" viewBox="0 0 8 5"><path d="M0 0h8l-4 4.500z" fill="#000"/></svg>
<span class="t" style="left:965.5px;top:603.0px;font-size:11.7px;line-height:15px;color:#000;transform:scaleX(0.8910);transform-origin:0 50%;">Dans les deux</span>
<div class="cb" style="left:1187px;top:605.3px;width:13px;height:13px;"></div>
<span class="t" style="left:1206.3px;top:603.8px;font-size:11.7px;line-height:15px;color:#000;transform:scaleX(0.8844);transform-origin:0 50%;">Montrer l'état</span>
<div class="cb" style="left:965px;top:633px;width:13px;height:13px;"></div>
<span class="t" style="left:984.4px;top:632.0px;font-size:11.7px;line-height:15px;color:#000;transform:scaleX(0.9051);transform-origin:0 50%;">Exclusivité WEB</span>
<span class="t" style="left:588.5px;top:654.8px;font-size:12.8px;line-height:17px;color:#5b6fa8;font-weight:bold;transform:scaleX(1.1400);transform-origin:0 50%;">Nombre de produits à créer, dans chacune des catégories sélectionnées (max</span>
<span class="t" style="left:619.3px;top:679.5px;font-size:12.8px;line-height:17px;color:#e65100;font-weight:bold;transform:scaleX(1.1241);transform-origin:0 50%;">1 catégorie()s est (sont) sélectionnée(s). Soit un total de 5 nouveau(x) produit(s)</span>
<div class="tb" style="left:1205.4px;top:652.9px;width:57.6px;height:22.7px;"></div>
<span class="t" style="left:1223.5px;top:656.5px;font-size:11.7px;line-height:15px;color:#000;transform:scaleX(0.9200);transform-origin:0 50%;">5</span>
<svg style="left:1249px;top:656px;" width="12" height="16" viewBox="0 0 12 16"><rect x="0.5" y="0.5" width="11" height="15" rx="1.2" fill="#dfeaf6" stroke="#4f8fd6" stroke-width="1"/><path d="M0.5 6v9a0.7 0.7 0 0 0 0.7 0.5h9.6a0.7 0.7 0 0 0 0.7-0.5" fill="none" stroke="#2f72c4" stroke-width="1"/><rect x="1.3" y="1.3" width="9.4" height="4.2" fill="#fff"/><rect x="1" y="5.8" width="10" height="9.4" fill="#e6eaee"/><rect x="2.0" y="6.8" width="2.1" height="2" fill="#5d9be0"/><rect x="5.0" y="6.8" width="2.1" height="2" fill="#5d9be0"/><rect x="8.0" y="6.8" width="2.1" height="2" fill="#5d9be0"/><rect x="2.0" y="9.7" width="2.1" height="2" fill="#c9cdd2"/><rect x="5.0" y="9.7" width="2.1" height="2" fill="#c9cdd2"/><rect x="8.0" y="9.7" width="2.1" height="2" fill="#c9cdd2"/><rect x="2.0" y="12.6" width="2.1" height="2" fill="#c9cdd2"/><rect x="5.0" y="12.6" width="2.1" height="2" fill="#c9cdd2"/><rect x="8.0" y="12.6" width="2.1" height="2" fill="#c9cdd2"/><ellipse cx="8.6" cy="3.3" rx="1.1" ry="1.5" fill="none" stroke="#111" stroke-width="0.9"/></svg>
<div style="left:705.6px;top:703.2px;width:85.7px;height:32.4px;border:1px solid #b4ac98;border-radius:3px;background:linear-gradient(#fff,#fcfcfa 60%,#f6efe2);box-shadow:inset 0 0 0 1.500px #fbdca4"></div>
<svg style="left:708px;top:710px;" width="18" height="18" viewBox="0 0 18 18"><path d="M9 0v18M0 9h18" stroke="#4aa832" stroke-width="3"/></svg>
<span class="t" style="left:745.1px;top:712.0px;font-size:11.7px;line-height:15px;color:#000;transform:scaleX(0.9200);transform-origin:0 50%;">Créer</span>
<div class="btn" style="left:990.4px;top:703px;width:86.6px;height:32.5px;"></div>
<svg style="left:992.5px;top:707px;" width="24" height="24" viewBox="0 0 24 24"><circle cx="12" cy="12" r="12" fill="#e04a33"/><path d="M7 7l10 10M17 7L7 17" stroke="#fff" stroke-width="2.6" stroke-linecap="round"/></svg>
<span class="t" style="left:1028.2px;top:712.0px;font-size:11.7px;line-height:15px;color:#000;transform:scaleX(0.9200);transform-origin:0 50%;">Fermer</span>
<div class="cb" style="left:707.5px;top:745.2px;width:13px;height:13px;"></div>
<span class="t" style="left:726.0px;top:744.0px;font-size:11.7px;line-height:15px;color:#000;transform:scaleX(0.8965);transform-origin:0 50%;">Puis rafraîchir la fenêtre principale</span>
<div class="cb" style="left:707.5px;top:762.35px;width:13px;height:13px;"></div>
<span class="t" style="left:726.0px;top:761.1px;font-size:11.7px;line-height:15px;color:#000;transform:scaleX(0.9071);transform-origin:0 50%;">Puis exécuter les hooks dans PS</span>
<div class="cb" style="left:707.5px;top:779.5px;width:13px;height:13px;"></div>
<span class="t" style="left:726.0px;top:778.3px;font-size:11.7px;line-height:15px;color:#000;transform:scaleX(0.8993);transform-origin:0 50%;">Puis ré-indexer la recherche de PS</span>
<svg style="left:242.5px;top:231px;" width="63.5" height="43.5" viewBox="0 0 63.5 43.5"><path d="M1.00 21.25C10.71 14.20 24.95 3.74 38.73 1.31A20.25 20.25 0 1 1 38.73 41.19C24.95 38.76 10.71 28.30 1.00 21.25Z" fill="#4a6fa8" transform="translate(0,0.7)"/><path d="M1.00 21.25C10.71 14.20 24.95 3.74 38.73 1.31A20.25 20.25 0 1 1 38.73 41.19C24.95 38.76 10.71 28.30 1.00 21.25Z" fill="#5b93e6"/><text x="38.9" y="30.9" text-anchor="middle" font-family="Liberation Sans, sans-serif" font-size="26" fill="#fff" stroke="#fff" stroke-width="0.8">1</text><rect x="32.4" y="27.6" width="5.6" height="4.5" fill="#5b93e6"/><rect x="41.6" y="27.6" width="5.6" height="4.5" fill="#5b93e6"/></svg>
<svg style="left:484.5px;top:143.95px;" width="63.75" height="43.5" viewBox="0 0 63.75 43.5"><path d="M1.00 21.25C10.71 14.20 25.20 3.74 38.98 1.31A20.25 20.25 0 1 1 38.98 41.19C25.20 38.76 10.71 28.30 1.00 21.25Z" fill="#4a6fa8" transform="translate(0,0.7)"/><path d="M1.00 21.25C10.71 14.20 25.20 3.74 38.98 1.31A20.25 20.25 0 1 1 38.98 41.19C25.20 38.76 10.71 28.30 1.00 21.25Z" fill="#5b93e6"/><text x="39.1" y="30.9" text-anchor="middle" font-family="Liberation Sans, sans-serif" font-size="26" fill="#fff" stroke="#fff" stroke-width="0.8">2</text></svg>
<svg style="left:497.85px;top:333.05px;" width="64.05" height="43.5" viewBox="0 0 64.05 43.5"><path d="M63.05 21.25C53.34 14.20 38.55 3.74 24.77 1.31A20.25 20.25 0 1 0 24.77 41.19C38.55 38.76 53.34 28.30 63.05 21.25Z" fill="#4a6fa8" transform="translate(0,0.7)"/><path d="M63.05 21.25C53.34 14.20 38.55 3.74 24.77 1.31A20.25 20.25 0 1 0 24.77 41.19C38.55 38.76 53.34 28.30 63.05 21.25Z" fill="#5b93e6"/><text x="23.6" y="30.9" text-anchor="middle" font-family="Liberation Sans, sans-serif" font-size="26" fill="#fff" stroke="#fff" stroke-width="0.8">3</text></svg>
<svg style="left:1125.85px;top:642.85px;" width="64.05" height="43.5" viewBox="0 0 64.05 43.5"><path d="M63.05 21.25C53.34 14.20 38.55 3.74 24.77 1.31A20.25 20.25 0 1 0 24.77 41.19C38.55 38.76 53.34 28.30 63.05 21.25Z" fill="#4a6fa8" transform="translate(0,0.7)"/><path d="M63.05 21.25C53.34 14.20 38.55 3.74 24.77 1.31A20.25 20.25 0 1 0 24.77 41.19C38.55 38.76 53.34 28.30 63.05 21.25Z" fill="#5b93e6"/><text x="23.6" y="30.9" text-anchor="middle" font-family="Liberation Sans, sans-serif" font-size="26" fill="#fff" stroke="#fff" stroke-width="0.8">4</text></svg>
<svg style="left:637.95px;top:696.05px;" width="63.95" height="43.5" viewBox="0 0 63.95 43.5"><path d="M62.95 21.25C53.24 14.20 38.55 3.74 24.77 1.31A20.25 20.25 0 1 0 24.77 41.19C38.55 38.76 53.24 28.30 62.95 21.25Z" fill="#4a6fa8" transform="translate(0,0.7)"/><path d="M62.95 21.25C53.24 14.20 38.55 3.74 24.77 1.31A20.25 20.25 0 1 0 24.77 41.19C38.55 38.76 53.24 28.30 62.95 21.25Z" fill="#5b93e6"/><text x="23.6" y="30.9" text-anchor="middle" font-family="Liberation Sans, sans-serif" font-size="26" fill="#fff" stroke="#fff" stroke-width="0.8">5</text></svg>
<svg style="left:401.95px;top:628.95px;" width="63.75" height="43.5" viewBox="0 0 63.75 43.5"><path d="M62.75 21.25C53.04 14.20 38.55 3.74 24.77 1.31A20.25 20.25 0 1 0 24.77 41.19C38.55 38.76 53.04 28.30 62.75 21.25Z" fill="#4a6fa8" transform="translate(0,0.7)"/><path d="M62.75 21.25C53.04 14.20 38.55 3.74 24.77 1.31A20.25 20.25 0 1 0 24.77 41.19C38.55 38.76 53.04 28.30 62.75 21.25Z" fill="#5b93e6"/><text x="23.6" y="30.9" text-anchor="middle" font-family="Liberation Sans, sans-serif" font-size="26" fill="#fff" stroke="#fff" stroke-width="0.8">6</text></svg>
</body></html>
